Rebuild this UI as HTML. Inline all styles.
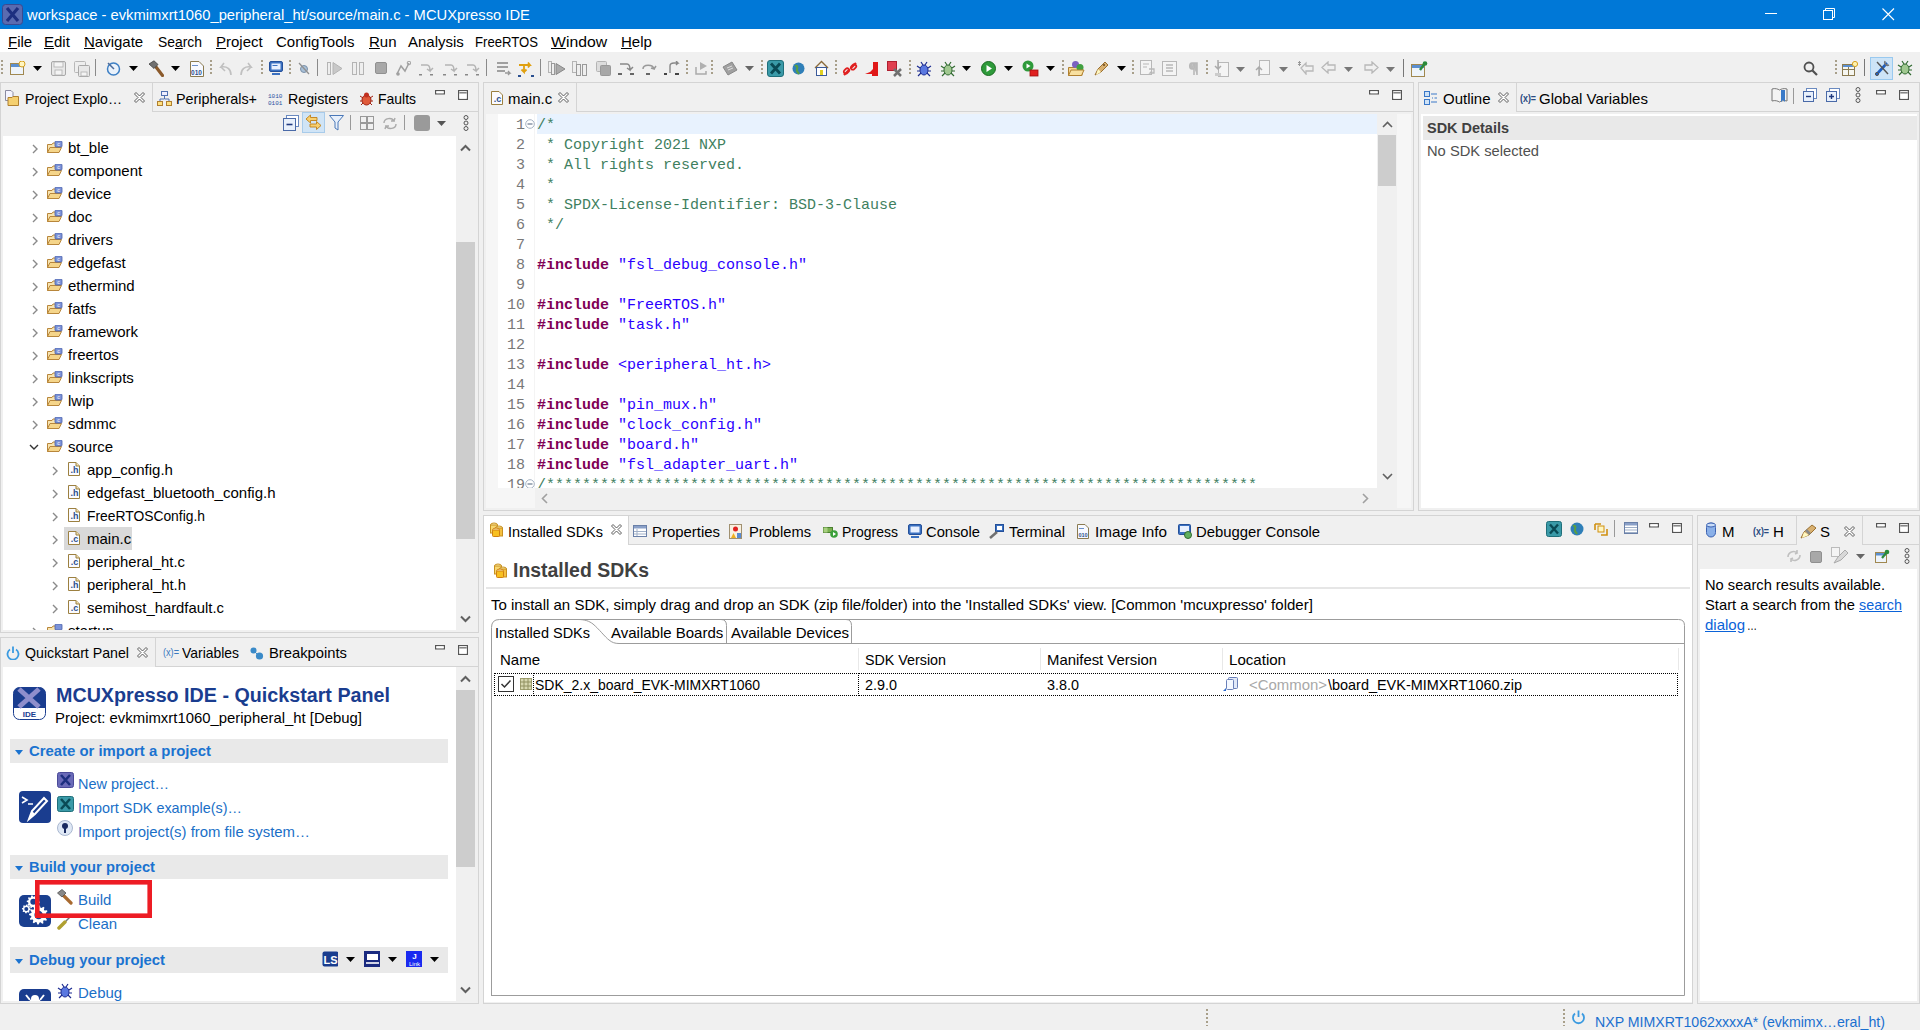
<!DOCTYPE html>
<html><head><meta charset="utf-8"><title>MCUXpresso IDE</title>
<style>
html,body{margin:0;padding:0;width:1920px;height:1030px;overflow:hidden;background:#f0f0f0;}
.a{position:absolute;}
.t{white-space:pre;}
svg{display:block;}
</style></head><body>
<div class="a" style="left:0px;top:0px;width:1920px;height:29px;background:#0078d7;"></div>
<svg class="a" style="left:2px;top:4px;" width="21" height="21" viewBox="0 0 21 21"><rect x="0.5" y="0.5" width="20" height="20" rx="3" fill="#5a6bb0" stroke="#3a4a90"/><path d="M5 4L16 17M16 4L5 17" stroke="#1d2f80" stroke-width="3.2"/></svg>
<div class="a t" style="left:27px;top:7.30px;font-size:15px;line-height:15px;color:#fff;font-weight:normal;font-family:'Liberation Sans', sans-serif;transform:scaleX(0.9825);transform-origin:0 0;">workspace - evkmimxrt1060_peripheral_ht/source/main.c - MCUXpresso IDE</div>
<div class="a" style="left:1765px;top:13px;width:12px;height:1px;background:#fff;"></div>
<svg class="a" style="left:1823px;top:8px;" width="12" height="12" viewBox="0 0 12 12"><rect x="0.5" y="2.5" width="9" height="9" fill="none" stroke="#fff"/><path d="M2.5 2.5V0.5H11.5V9.5H9.5" fill="none" stroke="#fff"/></svg>
<svg class="a" style="left:1882px;top:8px;" width="13" height="13" viewBox="0 0 13 13"><path d="M0.5 0.5L12 12M12 0.5L0.5 12" stroke="#fff" stroke-width="1.1"/></svg>
<div class="a" style="left:0px;top:29px;width:1920px;height:23px;background:#fff;"></div>
<div class="a t" style="left:8px;top:34.30px;font-size:15px;line-height:15px;color:#000;font-weight:normal;font-family:'Liberation Sans', sans-serif;"><u>F</u>ile</div>
<div class="a t" style="left:44px;top:34.30px;font-size:15px;line-height:15px;color:#000;font-weight:normal;font-family:'Liberation Sans', sans-serif;"><u>E</u>dit</div>
<div class="a t" style="left:84px;top:34.30px;font-size:15px;line-height:15px;color:#000;font-weight:normal;font-family:'Liberation Sans', sans-serif;"><u>N</u>avigate</div>
<div class="a t" style="left:158px;top:34.30px;font-size:15px;line-height:15px;color:#000;font-weight:normal;font-family:'Liberation Sans', sans-serif;transform:scaleX(0.9257);transform-origin:0 0;">Se<u>a</u>rch</div>
<div class="a t" style="left:216px;top:34.30px;font-size:15px;line-height:15px;color:#000;font-weight:normal;font-family:'Liberation Sans', sans-serif;"><u>P</u>roject</div>
<div class="a t" style="left:276px;top:34.30px;font-size:15px;line-height:15px;color:#000;font-weight:normal;font-family:'Liberation Sans', sans-serif;">ConfigTools</div>
<div class="a t" style="left:369px;top:34.30px;font-size:15px;line-height:15px;color:#000;font-weight:normal;font-family:'Liberation Sans', sans-serif;"><u>R</u>un</div>
<div class="a t" style="left:408px;top:34.30px;font-size:15px;line-height:15px;color:#000;font-weight:normal;font-family:'Liberation Sans', sans-serif;">Analysis</div>
<div class="a t" style="left:475px;top:34.30px;font-size:15px;line-height:15px;color:#000;font-weight:normal;font-family:'Liberation Sans', sans-serif;transform:scaleX(0.8754);transform-origin:0 0;">FreeRTOS</div>
<div class="a t" style="left:551px;top:34.30px;font-size:15px;line-height:15px;color:#000;font-weight:normal;font-family:'Liberation Sans', sans-serif;transform:scaleX(1.0498);transform-origin:0 0;"><u>W</u>indow</div>
<div class="a t" style="left:621px;top:34.30px;font-size:15px;line-height:15px;color:#000;font-weight:normal;font-family:'Liberation Sans', sans-serif;"><u>H</u>elp</div>
<div class="a" style="left:0px;top:52px;width:1920px;height:30px;background:#f0f0f0;"></div>
<svg class="a" style="left:1px;top:60px;" width="2" height="16" viewBox="0 0 2 16"><rect x="0" y="0" width="2" height="2" fill="#a89f8a"/><rect x="0" y="4" width="2" height="2" fill="#a89f8a"/><rect x="0" y="8" width="2" height="2" fill="#a89f8a"/><rect x="0" y="12" width="2" height="2" fill="#a89f8a"/></svg>
<svg class="a" style="left:10px;top:61px;" width="16" height="15" viewBox="0 0 16 15"><rect x="0.5" y="2.5" width="13" height="11" fill="#eef4fb" stroke="#a08850"/><rect x="1" y="3" width="12" height="3" fill="#5b8fd0"/><circle cx="12" cy="3" r="3" fill="#fff5c0" stroke="#d4a020"/></svg>
<svg class="a" style="left:33px;top:66px;" width="10" height="6" viewBox="0 0 10 6"><path d="M0 0H9L4.5 5Z" fill="#000"/></svg>
<svg class="a" style="left:51px;top:61px;" width="15" height="15" viewBox="0 0 15 15"><rect x="0.5" y="0.5" width="14" height="14" rx="1.5" fill="#e8e8e8" stroke="#a8a8a8"/><rect x="3" y="1" width="9" height="5" fill="#f4f4f4" stroke="#b0b0b0" stroke-width="0.8"/><rect x="4" y="9" width="7" height="5" fill="#f4f4f4" stroke="#b0b0b0" stroke-width="0.8"/></svg>
<svg class="a" style="left:74px;top:61px;" width="16" height="16" viewBox="0 0 16 16"><rect x="0.5" y="0.5" width="11" height="11" rx="1" fill="#eee" stroke="#b8b8b8"/><rect x="4.5" y="4.5" width="11" height="11" rx="1" fill="#e8e8e8" stroke="#a8a8a8"/><rect x="7" y="11" width="6" height="4" fill="#f4f4f4" stroke="#b0b0b0" stroke-width="0.8"/></svg>
<div class="a" style="left:95px;top:59px;width:1px;height:17px;background:#8a8a8a;"></div>
<svg class="a" style="left:106px;top:61px;" width="15" height="15" viewBox="0 0 15 15"><circle cx="7.5" cy="8" r="6" fill="#eaf2fb" stroke="#3d7fc4" stroke-width="1.5"/><path d="M2 2L8 8" stroke="#4a6a9a" stroke-width="1.5"/></svg>
<svg class="a" style="left:129px;top:66px;" width="10" height="6" viewBox="0 0 10 6"><path d="M0 0H9L4.5 5Z" fill="#000"/></svg>
<svg class="a" style="left:147px;top:60px;" width="17" height="17" viewBox="0 0 17 17"><path d="M9 7L15.5 15.5" stroke="#8b5a2b" stroke-width="3.2" stroke-linecap="round"/><path d="M2 4L7 0.8L11 4.5L7 8.5Z" fill="#707070" stroke="#404040" stroke-width="0.8"/></svg>
<svg class="a" style="left:171px;top:66px;" width="10" height="6" viewBox="0 0 10 6"><path d="M0 0H9L4.5 5Z" fill="#000"/></svg>
<svg class="a" style="left:190px;top:61px;" width="14" height="16" viewBox="0 0 14 16"><path d="M0.5 0.5H9L13.5 5V15.5H0.5Z" fill="#f7f9ff" stroke="#8a7a50"/><text x="6.5" y="14" font-size="6.5" font-weight="bold" fill="#2d4f8e" text-anchor="middle" font-family="Liberation Sans">010</text><rect x="2" y="4" width="6" height="1" fill="#6b8fc8"/></svg>
<svg class="a" style="left:210px;top:60px;" width="2" height="16" viewBox="0 0 2 16"><rect x="0" y="0" width="2" height="2" fill="#a89f8a"/><rect x="0" y="4" width="2" height="2" fill="#a89f8a"/><rect x="0" y="8" width="2" height="2" fill="#a89f8a"/><rect x="0" y="12" width="2" height="2" fill="#a89f8a"/></svg>
<svg class="a" style="left:217px;top:61px;" width="16" height="15" viewBox="0 0 16 15"><path d="M14 14C14 8 10 5 4 6L7 2M4 6L8 10" fill="none" stroke="#c0c0c0" stroke-width="1.6"/></svg>
<svg class="a" style="left:239px;top:61px;" width="16" height="15" viewBox="0 0 16 15"><path d="M2 14C2 8 6 5 12 6L9 2M12 6L8 10" fill="none" stroke="#c0c0c0" stroke-width="1.6"/></svg>
<svg class="a" style="left:261px;top:60px;" width="2" height="16" viewBox="0 0 2 16"><rect x="0" y="0" width="2" height="2" fill="#a89f8a"/><rect x="0" y="4" width="2" height="2" fill="#a89f8a"/><rect x="0" y="8" width="2" height="2" fill="#a89f8a"/><rect x="0" y="12" width="2" height="2" fill="#a89f8a"/></svg>
<svg class="a" style="left:269px;top:61px;" width="14" height="15" viewBox="0 0 14 15"><rect x="0.5" y="0.5" width="13" height="10" rx="1.5" fill="#3a70c0" stroke="#24509a"/><rect x="2.5" y="2.5" width="9" height="6" fill="#e8f0ff"/><rect x="3.5" y="4" width="5" height="1" fill="#3a70c0"/><rect x="3" y="12" width="8" height="2" fill="#3a70c0"/></svg>
<svg class="a" style="left:289px;top:60px;" width="2" height="16" viewBox="0 0 2 16"><rect x="0" y="0" width="2" height="2" fill="#a89f8a"/><rect x="0" y="4" width="2" height="2" fill="#a89f8a"/><rect x="0" y="8" width="2" height="2" fill="#a89f8a"/><rect x="0" y="12" width="2" height="2" fill="#a89f8a"/></svg>
<svg class="a" style="left:298px;top:62px;" width="12" height="13" viewBox="0 0 12 13"><circle cx="6" cy="7" r="3.5" fill="#a8c0d8" stroke="#7a90a8"/><path d="M1 1L11 12" stroke="#909090" stroke-width="1.3"/></svg>
<div class="a" style="left:317px;top:59px;width:1px;height:17px;background:#8a8a8a;"></div>
<svg class="a" style="left:327px;top:62px;" width="16" height="13" viewBox="0 0 16 13"><rect x="0.5" y="0.5" width="3" height="12" fill="#eee" stroke="#b4b4b4"/><path d="M6 0.5L15 6.5L6 12.5Z" fill="#c8c8c8" stroke="#b4b4b4"/></svg>
<svg class="a" style="left:352px;top:62px;" width="12" height="13" viewBox="0 0 12 13"><rect x="0.5" y="0.5" width="4" height="12" fill="#eee" stroke="#b4b4b4"/><rect x="7.5" y="0.5" width="4" height="12" fill="#eee" stroke="#b4b4b4"/></svg>
<svg class="a" style="left:375px;top:62px;" width="12" height="12" viewBox="0 0 12 12"><rect x="0.5" y="0.5" width="11" height="11" rx="1.5" fill="#a8a8a8" stroke="#909090"/></svg>
<svg class="a" style="left:396px;top:61px;" width="15" height="15" viewBox="0 0 15 15"><path d="M1 13L5 5L9 10L13 2" fill="none" stroke="#a0a0a0" stroke-width="1.5"/><circle cx="2" cy="13" r="1.8" fill="#a0a0a0"/><circle cx="13" cy="2" r="1.8" fill="none" stroke="#a0a0a0"/></svg>
<svg class="a" style="left:418px;top:62px;" width="17" height="14" viewBox="0 0 17 14"><path d="M3 3H9C12 3 12 7 12 9L9 7M12 9L15 6" fill="none" stroke="#b4b4b4" stroke-width="1.5"/><rect x="1" y="12" width="3" height="1.5" fill="#888"/><rect x="12" y="12" width="3" height="1.5" fill="#888"/></svg>
<svg class="a" style="left:442px;top:62px;" width="17" height="14" viewBox="0 0 17 14"><path d="M3 3H9C12 3 12 7 12 9L9 7M12 9L15 6" fill="none" stroke="#b4b4b4" stroke-width="1.5"/><rect x="1" y="12" width="3" height="1.5" fill="#888"/><rect x="12" y="12" width="3" height="1.5" fill="#888"/></svg>
<svg class="a" style="left:464px;top:62px;" width="17" height="14" viewBox="0 0 17 14"><path d="M3 3H9C12 3 12 7 12 9L9 7M12 9L15 6" fill="none" stroke="#b4b4b4" stroke-width="1.5"/><rect x="1" y="12" width="3" height="1.5" fill="#888"/><rect x="12" y="12" width="3" height="1.5" fill="#888"/></svg>
<div class="a" style="left:486px;top:59px;width:1px;height:17px;background:#8a8a8a;"></div>
<svg class="a" style="left:496px;top:61px;" width="16" height="16" viewBox="0 0 16 16"><rect x="1" y="1" width="11" height="2" fill="#a0a0a0"/><rect x="1" y="5" width="11" height="2" fill="#a0a0a0"/><rect x="1" y="9" width="8" height="2" fill="#a0a0a0"/><path d="M9 12H14L12 10M14 12L12 14" fill="none" stroke="#999" stroke-width="1.3"/></svg>
<svg class="a" style="left:518px;top:61px;" width="17" height="16" viewBox="0 0 17 16"><path d="M1 4H12L10 1.5M12 4L10 6.5" fill="none" stroke="#e0a010" stroke-width="1.8"/><path d="M6 4V11L3.5 8.5M6 11L8.5 8.5" fill="none" stroke="#e0a010" stroke-width="1.8"/><rect x="0" y="14" width="3" height="2" fill="#2a5090"/><rect x="13" y="14" width="3" height="2" fill="#2a5090"/></svg>
<div class="a" style="left:540px;top:59px;width:1px;height:17px;background:#8a8a8a;"></div>
<svg class="a" style="left:548px;top:61px;" width="18" height="15" viewBox="0 0 18 15"><rect x="0.5" y="0.5" width="3" height="11" fill="#eee" stroke="#b4b4b4"/><rect x="3.5" y="2.5" width="3" height="11" fill="#eee" stroke="#999"/><path d="M8 2.5L17 8L8 13.5Z" fill="#aaa" stroke="#888"/></svg>
<svg class="a" style="left:572px;top:61px;" width="16" height="15" viewBox="0 0 16 15"><rect x="0.5" y="0.5" width="4" height="11" fill="#eee" stroke="#b4b4b4"/><rect x="4.5" y="3.5" width="4" height="11" fill="#eee" stroke="#999"/><rect x="10.5" y="3.5" width="4" height="11" fill="#eee" stroke="#999"/></svg>
<svg class="a" style="left:596px;top:61px;" width="15" height="15" viewBox="0 0 15 15"><rect x="0.5" y="0.5" width="10" height="10" rx="1" fill="#ddd" stroke="#b4b4b4"/><rect x="4.5" y="4.5" width="10" height="10" rx="1" fill="#a8a8a8" stroke="#999"/></svg>
<svg class="a" style="left:618px;top:62px;" width="17" height="14" viewBox="0 0 17 14"><path d="M2 2H9C12 2 12 6 12 8L9 6M12 8L15 5" fill="none" stroke="#888" stroke-width="1.5"/><rect x="0" y="11" width="4" height="2" fill="#666"/><rect x="12" y="11" width="4" height="2" fill="#666"/></svg>
<svg class="a" style="left:641px;top:62px;" width="17" height="14" viewBox="0 0 17 14"><path d="M2 7C2 2 12 2 13 7L10 6M13 7L15 4" fill="none" stroke="#999" stroke-width="1.5"/><rect x="5" y="11" width="4" height="2" fill="#666"/></svg>
<svg class="a" style="left:664px;top:61px;" width="16" height="15" viewBox="0 0 16 15"><path d="M6 12V5C6 3 8 2 10 2H14L12 0M14 2L12 4" fill="none" stroke="#888" stroke-width="1.4"/><rect x="0" y="12" width="3" height="2" fill="#444"/><rect x="11" y="12" width="4" height="2" fill="#444"/></svg>
<svg class="a" style="left:686px;top:60px;" width="2" height="16" viewBox="0 0 2 16"><rect x="0" y="0" width="2" height="2" fill="#a89f8a"/><rect x="0" y="4" width="2" height="2" fill="#a89f8a"/><rect x="0" y="8" width="2" height="2" fill="#a89f8a"/><rect x="0" y="12" width="2" height="2" fill="#a89f8a"/></svg>
<svg class="a" style="left:693px;top:61px;" width="16" height="15" viewBox="0 0 16 15"><path d="M3 6V13H13V10" fill="none" stroke="#aaa" stroke-width="1.5"/><path d="M7 1L14 5L7 9Z" fill="#b0b0b0"/></svg>
<svg class="a" style="left:711px;top:60px;" width="2" height="16" viewBox="0 0 2 16"><rect x="0" y="0" width="2" height="2" fill="#a89f8a"/><rect x="0" y="4" width="2" height="2" fill="#a89f8a"/><rect x="0" y="8" width="2" height="2" fill="#a89f8a"/><rect x="0" y="12" width="2" height="2" fill="#a89f8a"/></svg>
<svg class="a" style="left:722px;top:61px;" width="16" height="15" viewBox="0 0 16 15"><path d="M1 6L10 1L15 9L6 14Z" fill="#a0a0a0" stroke="#888"/><path d="M5 7L10 5M6 9L11 7" stroke="#ddd"/></svg>
<svg class="a" style="left:745px;top:66px;" width="10" height="6" viewBox="0 0 10 6"><path d="M0 0H9L4.5 5Z" fill="#666"/></svg>
<svg class="a" style="left:761px;top:60px;" width="2" height="16" viewBox="0 0 2 16"><rect x="0" y="0" width="2" height="2" fill="#a89f8a"/><rect x="0" y="4" width="2" height="2" fill="#a89f8a"/><rect x="0" y="8" width="2" height="2" fill="#a89f8a"/><rect x="0" y="12" width="2" height="2" fill="#a89f8a"/></svg>
<svg class="a" style="left:767px;top:60px;" width="17" height="17" viewBox="0 0 17 17"><rect x="0.5" y="0.5" width="16" height="16" rx="2.5" fill="#3a9aa8" stroke="#1f6f7a"/><path d="M4 3.5L13 13.5M13 3.5L4 13.5" stroke="#0a4a55" stroke-width="2.8"/></svg>
<svg class="a" style="left:792px;top:62px;" width="13" height="13" viewBox="0 0 13 13"><circle cx="6.5" cy="6.5" r="6" fill="#2f7fb8"/><path d="M3 4C5 3 6 5 5 7C4 9 6 10 7 12" fill="none" stroke="#5aa040" stroke-width="2"/></svg>
<svg class="a" style="left:814px;top:60px;" width="15" height="17" viewBox="0 0 15 17"><path d="M1 8L7.5 1.5L14 8" fill="none" stroke="#8a6a3a" stroke-width="1.4"/><rect x="2.5" y="7.5" width="10" height="8" fill="#fff" stroke="#3a5a9a"/><rect x="6" y="10" width="3" height="5" fill="#e0d020"/></svg>
<svg class="a" style="left:835px;top:60px;" width="2" height="16" viewBox="0 0 2 16"><rect x="0" y="0" width="2" height="2" fill="#a89f8a"/><rect x="0" y="4" width="2" height="2" fill="#a89f8a"/><rect x="0" y="8" width="2" height="2" fill="#a89f8a"/><rect x="0" y="12" width="2" height="2" fill="#a89f8a"/></svg>
<svg class="a" style="left:842px;top:61px;" width="16" height="16" viewBox="0 0 16 16"><path d="M2 14L7 9M9 7L14 2" stroke="#e02020" stroke-width="2.2"/><rect x="1.5" y="8" width="6" height="4" rx="2" transform="rotate(-45 4.5 10)" fill="none" stroke="#e02020" stroke-width="1.8"/><rect x="8.5" y="4" width="6" height="4" rx="2" transform="rotate(-45 11.5 6)" fill="none" stroke="#e02020" stroke-width="1.8"/></svg>
<svg class="a" style="left:864px;top:61px;" width="15" height="16" viewBox="0 0 15 16"><path d="M9 1H14V15H8V13H1L6 11L9 8Z" fill="#e01818"/></svg>
<svg class="a" style="left:887px;top:61px;" width="15" height="16" viewBox="0 0 15 16"><rect x="0.5" y="0.5" width="9" height="9" fill="#e04050" stroke="#b02030"/><path d="M7 8L14 15M14 8L7 15" stroke="#707070" stroke-width="2.5"/></svg>
<svg class="a" style="left:909px;top:60px;" width="2" height="16" viewBox="0 0 2 16"><rect x="0" y="0" width="2" height="2" fill="#a89f8a"/><rect x="0" y="4" width="2" height="2" fill="#a89f8a"/><rect x="0" y="8" width="2" height="2" fill="#a89f8a"/><rect x="0" y="12" width="2" height="2" fill="#a89f8a"/></svg>
<svg class="a" style="left:916px;top:61px;" width="16" height="16" viewBox="0 0 16 16"><ellipse cx="8" cy="9" rx="4" ry="5" fill="#5a78e0" stroke="#1a2a90"/><path d="M1 5L4 7M15 5L12 7M1 10H4M15 10H12M2 15L5 12M14 15L11 12M5 1L7 4M11 1L9 4" stroke="#1a2a90" stroke-width="1.2"/></svg>
<svg class="a" style="left:940px;top:61px;" width="16" height="16" viewBox="0 0 16 16"><ellipse cx="8" cy="9" rx="4" ry="5" fill="#a0c890" stroke="#306a30"/><path d="M1 5L4 7M15 5L12 7M1 10H4M15 10H12M2 15L5 12M14 15L11 12M5 1L7 4M11 1L9 4" stroke="#306a30" stroke-width="1.2"/></svg>
<svg class="a" style="left:962px;top:66px;" width="10" height="6" viewBox="0 0 10 6"><path d="M0 0H9L4.5 5Z" fill="#000"/></svg>
<svg class="a" style="left:981px;top:61px;" width="15" height="15" viewBox="0 0 15 15"><circle cx="7.5" cy="7.5" r="7" fill="#2e9a3a" stroke="#1a6a20"/><path d="M5.5 4L11 7.5L5.5 11Z" fill="#fff"/></svg>
<svg class="a" style="left:1004px;top:66px;" width="10" height="6" viewBox="0 0 10 6"><path d="M0 0H9L4.5 5Z" fill="#000"/></svg>
<svg class="a" style="left:1022px;top:60px;" width="17" height="17" viewBox="0 0 17 17"><circle cx="6" cy="6" r="5.5" fill="#2e9a3a"/><path d="M4.5 3.5L8.5 6L4.5 8.5Z" fill="#fff"/><rect x="8" y="10" width="8" height="6" fill="#e02020" stroke="#a01010" stroke-width="0.8"/></svg>
<svg class="a" style="left:1046px;top:66px;" width="10" height="6" viewBox="0 0 10 6"><path d="M0 0H9L4.5 5Z" fill="#000"/></svg>
<svg class="a" style="left:1062px;top:60px;" width="2" height="16" viewBox="0 0 2 16"><rect x="0" y="0" width="2" height="2" fill="#a89f8a"/><rect x="0" y="4" width="2" height="2" fill="#a89f8a"/><rect x="0" y="8" width="2" height="2" fill="#a89f8a"/><rect x="0" y="12" width="2" height="2" fill="#a89f8a"/></svg>
<svg class="a" style="left:1068px;top:60px;" width="17" height="17" viewBox="0 0 17 17"><path d="M0.5 7.5H7L8 6H14V15.5H0.5Z" fill="#f5d590" stroke="#b08030"/><circle cx="7.5" cy="4.5" r="3.5" fill="#7a60c0"/><circle cx="12" cy="7.5" r="3.5" fill="#40a040"/><path d="M0.5 15.5L3 10H16L13.5 15.5Z" fill="#f8e0a0" stroke="#b08030"/></svg>
<svg class="a" style="left:1093px;top:60px;" width="17" height="17" viewBox="0 0 17 17"><path d="M2 15L5 9L12 2L15 5L8 12Z" fill="#d8b070" stroke="#9a7030"/><path d="M5 9L8 12L3 15Z" fill="#fff8c0"/><circle cx="11" cy="5" r="1" fill="#6a4a20"/></svg>
<svg class="a" style="left:1117px;top:66px;" width="10" height="6" viewBox="0 0 10 6"><path d="M0 0H9L4.5 5Z" fill="#000"/></svg>
<svg class="a" style="left:1132px;top:60px;" width="2" height="16" viewBox="0 0 2 16"><rect x="0" y="0" width="2" height="2" fill="#a89f8a"/><rect x="0" y="4" width="2" height="2" fill="#a89f8a"/><rect x="0" y="8" width="2" height="2" fill="#a89f8a"/><rect x="0" y="12" width="2" height="2" fill="#a89f8a"/></svg>
<svg class="a" style="left:1140px;top:60px;" width="16" height="16" viewBox="0 0 16 16"><rect x="0.5" y="0.5" width="11" height="14" fill="#f4f4f4" stroke="#b8b8b8"/><path d="M3 4H9M3 7H7" stroke="#b8b8b8"/><path d="M9 9H14V13H10L12 11" fill="none" stroke="#b8b8b8" stroke-width="1.3"/></svg>
<svg class="a" style="left:1162px;top:61px;" width="15" height="15" viewBox="0 0 15 15"><rect x="0.5" y="0.5" width="14" height="14" fill="#f4f4f4" stroke="#b8b8b8"/><path d="M4 4H11M4 7H11M4 10H11" stroke="#b8b8b8" stroke-width="1.5"/></svg>
<svg class="a" style="left:1188px;top:62px;" width="10" height="13" viewBox="0 0 10 13"><path d="M4 1H9V13M6 1V13M4 1C1 1 1 7 4 7H6" fill="#bbb" stroke="#b8b8b8" stroke-width="1.6"/></svg>
<svg class="a" style="left:1206px;top:60px;" width="2" height="16" viewBox="0 0 2 16"><rect x="0" y="0" width="2" height="2" fill="#a89f8a"/><rect x="0" y="4" width="2" height="2" fill="#a89f8a"/><rect x="0" y="8" width="2" height="2" fill="#a89f8a"/><rect x="0" y="12" width="2" height="2" fill="#a89f8a"/></svg>
<svg class="a" style="left:1214px;top:60px;" width="15" height="17" viewBox="0 0 15 17"><rect x="4.5" y="2.5" width="10" height="14" fill="#f4f4f4" stroke="#b8b8b8"/><path d="M4 0V9L1 6M4 9L7 6" fill="none" stroke="#aaa" stroke-width="1.5"/><rect x="1" y="13" width="6" height="3" fill="#ccc"/></svg>
<svg class="a" style="left:1236px;top:67px;" width="10" height="6" viewBox="0 0 10 6"><path d="M0 0H9L4.5 5Z" fill="#777"/></svg>
<svg class="a" style="left:1255px;top:60px;" width="15" height="17" viewBox="0 0 15 17"><rect x="4.5" y="0.5" width="10" height="14" fill="#f4f4f4" stroke="#b8b8b8"/><path d="M4 16V7L1 10M4 7L7 10" fill="none" stroke="#aaa" stroke-width="1.5"/></svg>
<svg class="a" style="left:1279px;top:67px;" width="10" height="6" viewBox="0 0 10 6"><path d="M0 0H9L4.5 5Z" fill="#777"/></svg>
<svg class="a" style="left:1297px;top:61px;" width="17" height="14" viewBox="0 0 17 14"><path d="M4 7L9 2V5H16V10H9V13Z" fill="none" stroke="#b8b8b8" stroke-width="1.3"/><path d="M1 1L4 4M4 1L1 4M2.5 0V5" stroke="#999"/></svg>
<svg class="a" style="left:1321px;top:61px;" width="15" height="13" viewBox="0 0 15 13"><path d="M1 6.5L7 1V4H14V9H7V12Z" fill="none" stroke="#b8b8b8" stroke-width="1.3"/></svg>
<svg class="a" style="left:1344px;top:67px;" width="10" height="6" viewBox="0 0 10 6"><path d="M0 0H9L4.5 5Z" fill="#777"/></svg>
<svg class="a" style="left:1364px;top:61px;" width="15" height="13" viewBox="0 0 15 13"><path d="M14 6.5L8 1V4H1V9H8V12Z" fill="none" stroke="#b8b8b8" stroke-width="1.3"/></svg>
<svg class="a" style="left:1386px;top:67px;" width="10" height="6" viewBox="0 0 10 6"><path d="M0 0H9L4.5 5Z" fill="#777"/></svg>
<div class="a" style="left:1403px;top:59px;width:1px;height:18px;background:#777;"></div>
<svg class="a" style="left:1411px;top:61px;" width="17" height="16" viewBox="0 0 17 16"><rect x="0.5" y="3.5" width="13" height="12" fill="#eef4fb" stroke="#a08850"/><rect x="1" y="4" width="12" height="3" fill="#5b8fd0"/><path d="M9 9L14 2" stroke="#2a8a3a" stroke-width="2.4"/><circle cx="14" cy="2.5" r="2.3" fill="#2a8a3a"/></svg>
<svg class="a" style="left:1803px;top:61px;" width="15" height="15" viewBox="0 0 15 15"><circle cx="6" cy="6" r="4.5" fill="none" stroke="#505050" stroke-width="1.8"/><path d="M9.5 9.5L14 14" stroke="#505050" stroke-width="2.2"/></svg>
<svg class="a" style="left:1835px;top:60px;" width="2" height="16" viewBox="0 0 2 16"><rect x="0" y="0" width="2" height="2" fill="#a89f8a"/><rect x="0" y="4" width="2" height="2" fill="#a89f8a"/><rect x="0" y="8" width="2" height="2" fill="#a89f8a"/><rect x="0" y="12" width="2" height="2" fill="#a89f8a"/></svg>
<svg class="a" style="left:1842px;top:61px;" width="16" height="15" viewBox="0 0 16 15"><rect x="0.5" y="3.5" width="12" height="11" fill="#f6f6f0" stroke="#8a7a50"/><path d="M0.5 8.5H12.5M6.5 3.5V14.5" stroke="#8a7a50"/><rect x="1" y="4" width="11" height="2" fill="#5b8fd0"/><circle cx="13" cy="3" r="2.6" fill="#fff3b0" stroke="#d4a020"/></svg>
<div class="a" style="left:1864px;top:59px;width:1px;height:17px;background:#777;"></div>
<div class="a" style="left:1870px;top:57px;width:23px;height:23px;background:#cde4f7;box-sizing:border-box;border:1px solid #99c9ef;"></div>
<svg class="a" style="left:1874px;top:60px;" width="16" height="17" viewBox="0 0 16 17"><path d="M2 15L13 3" stroke="#1f5fbf" stroke-width="2.6"/><path d="M3 2L14 14" stroke="#555" stroke-width="1.4"/><circle cx="3" cy="14" r="1.6" fill="none" stroke="#555"/><path d="M11 1A3 3 0 0 0 15 5" fill="none" stroke="#777" stroke-width="1.6"/></svg>
<svg class="a" style="left:1897px;top:60px;" width="16" height="16" viewBox="0 0 16 16"><ellipse cx="8" cy="9" rx="4" ry="5" fill="#a0c890" stroke="#306a30"/><path d="M1 5L4 7M15 5L12 7M1 10H4M15 10H12M2 15L5 12M14 15L11 12M5 1L7 4M11 1L9 4" stroke="#306a30" stroke-width="1.2"/></svg>
<div class="a" style="left:0px;top:82px;width:479px;height:551px;background:#f0f0f0;box-sizing:border-box;border:1px solid #d4d4d4;"></div>
<div class="a" style="left:152px;top:83px;width:1px;height:28px;background:#d4d4d4;"></div>
<div class="a" style="left:152px;top:111px;width:326px;height:1px;background:#d4d4d4;"></div>
<div class="a" style="left:3px;top:136px;width:453px;height:494px;background:#fff;"></div>
<div class="a" style="left:456px;top:136px;width:20px;height:494px;background:#f0f0f0;"></div>
<div class="a" style="left:456px;top:242px;width:19px;height:297px;background:#cdcdcd;"></div>
<svg class="a" style="left:460px;top:144px;" width="11" height="8" viewBox="0 0 11 8"><path d="M1 6.5L5.5 2L10 6.5" stroke="#606060" stroke-width="2" fill="none"/></svg>
<svg class="a" style="left:460px;top:615px;" width="11" height="8" viewBox="0 0 11 8"><path d="M1 1.5L5.5 6L10 1.5" stroke="#606060" stroke-width="2" fill="none"/></svg>
<svg class="a" style="left:5px;top:90px;" width="14" height="16" viewBox="0 0 14 16"><path d="M0.5 0.5H6L8 2.5V10.5H0.5Z" fill="#f4f4ff" stroke="#8a8aa0"/><path d="M3 7.5H7L8 6.5H13.5V15.5H3Z" fill="#f5d070" stroke="#b08030"/></svg>
<div class="a t" style="left:25px;top:91.30px;font-size:15px;line-height:15px;color:#000;font-weight:normal;font-family:'Liberation Sans', sans-serif;transform:scaleX(0.9383);transform-origin:0 0;">Project Explo…</div>
<svg class="a" style="left:134px;top:92px;" width="11" height="11" viewBox="0 0 11 11"><path d="M0.5 2L2 0.5L5.5 4L9 0.5L10.5 2L7 5.5L10.5 9L9 10.5L5.5 7L2 10.5L0.5 9L4 5.5Z" fill="#fff" stroke="#5a5a5a" stroke-width="1" stroke-linejoin="round"/></svg>
<svg class="a" style="left:157px;top:91px;" width="15" height="15" viewBox="0 0 15 15"><rect x="4.5" y="0.5" width="6" height="4" fill="#eef" stroke="#5070b0"/><rect x="0.5" y="10.5" width="5" height="4" fill="#ffe080" stroke="#b08030"/><rect x="9.5" y="10.5" width="5" height="4" fill="#ffe080" stroke="#b08030"/><path d="M7.5 5V8H3V10M8 8H12V10" fill="none" stroke="#5070b0"/></svg>
<div class="a t" style="left:176px;top:91.30px;font-size:15px;line-height:15px;color:#000;font-weight:normal;font-family:'Liberation Sans', sans-serif;transform:scaleX(0.9570);transform-origin:0 0;">Peripherals+</div>
<svg class="a" style="left:268px;top:92px;" width="16" height="13" viewBox="0 0 16 13"><text x="0" y="6" font-size="6" fill="#2a50a0" font-family="Liberation Mono">1010</text><text x="0" y="12.5" font-size="6" fill="#2a50a0" font-family="Liberation Mono">0101</text></svg>
<div class="a t" style="left:288px;top:91.30px;font-size:15px;line-height:15px;color:#000;font-weight:normal;font-family:'Liberation Sans', sans-serif;transform:scaleX(0.9470);transform-origin:0 0;">Registers</div>
<svg class="a" style="left:359px;top:91px;" width="15" height="15" viewBox="0 0 15 15"><ellipse cx="7.5" cy="9" rx="4.5" ry="5" fill="#e05a3a" stroke="#a02010"/><path d="M1 5L4 7M14 5L11 7M1 10H3M14 10H12M2 14L4 12M13 14L11 12" stroke="#a02010"/><circle cx="7.5" cy="4" r="2.5" fill="#c03020"/></svg>
<div class="a t" style="left:378px;top:91.30px;font-size:15px;line-height:15px;color:#000;font-weight:normal;font-family:'Liberation Sans', sans-serif;transform:scaleX(0.9304);transform-origin:0 0;">Faults</div>
<svg class="a" style="left:435px;top:90px;" width="10" height="5" viewBox="0 0 10 5"><path fill-rule="evenodd" d="M0 0H10V4.6H0ZM1.3 1.3V3.3H8.7V1.3Z" fill="#555"/><rect x="1.3" y="1.3" width="7.4" height="2" fill="#fff"/></svg>
<svg class="a" style="left:458px;top:90px;" width="10" height="10" viewBox="0 0 10 10"><path fill-rule="evenodd" d="M0 0H10V10H0ZM1.3 1.3V8.7H8.7V1.3Z" fill="#555"/><rect x="1.3" y="1.3" width="7.4" height="7.4" fill="#fff"/><rect x="1.3" y="2.3" width="7.4" height="1.1" fill="#555"/></svg>
<svg class="a" style="left:283px;top:115px;" width="16" height="16" viewBox="0 0 16 16"><rect x="3.5" y="0.5" width="12" height="11" fill="#fff" stroke="#6a8ac0"/><rect x="0.5" y="3.5" width="12" height="12" fill="#e8f0fb" stroke="#4a6aa8"/><path d="M3.5 9.5H9.5" stroke="#203a80" stroke-width="1.6"/></svg>
<div class="a" style="left:302px;top:112px;width:23px;height:21px;background:#d0e4f6;box-sizing:border-box;border:1px solid #a8cbea;"></div>
<svg class="a" style="left:305px;top:114px;" width="17" height="17" viewBox="0 0 17 17"><path d="M1 5L5.5 1V3.5H12V6.5H5.5V9Z" fill="#f8d070" stroke="#c08018" stroke-width="0.9" stroke-linejoin="round"/><path d="M16 11.5L11.5 7.5V10H5V13H11.5V15.5Z" fill="#f8d070" stroke="#c08018" stroke-width="0.9" stroke-linejoin="round"/></svg>
<svg class="a" style="left:329px;top:115px;" width="15" height="16" viewBox="0 0 15 16"><path d="M0.5 0.5H14.5L9 7V15L6 13V7Z" fill="#e8f0fb" stroke="#4a78b8"/></svg>
<div class="a" style="left:350px;top:115px;width:1px;height:15px;background:#999;"></div>
<svg class="a" style="left:360px;top:116px;" width="15" height="15" viewBox="0 0 15 15"><rect x="0.5" y="0.5" width="6" height="6" fill="none" stroke="#999"/><rect x="7.5" y="0.5" width="6" height="6" fill="none" stroke="#999"/><rect x="0.5" y="7.5" width="6" height="6" fill="none" stroke="#999"/><rect x="7.5" y="7.5" width="6" height="6" fill="none" stroke="#999"/></svg>
<svg class="a" style="left:382px;top:116px;" width="16" height="15" viewBox="0 0 16 15"><path d="M2 7C2 2 10 1 12 5L9 5M12 5L13 2M14 8C14 13 6 14 4 10L7 10M4 10L3 13" fill="none" stroke="#aaa" stroke-width="1.4"/></svg>
<div class="a" style="left:404px;top:115px;width:1px;height:15px;background:#999;"></div>
<div class="a" style="left:414px;top:115px;width:16px;height:16px;background:#9a9a9a;border-radius:3px;"></div>
<svg class="a" style="left:437px;top:121px;" width="10" height="6" viewBox="0 0 10 6"><path d="M0 0H9L4.5 5Z" fill="#555"/></svg>
<svg class="a" style="left:463px;top:115px;" width="6" height="16" viewBox="0 0 6 16"><circle cx="3" cy="2.5" r="2" fill="none" stroke="#555"/><circle cx="3" cy="8" r="2" fill="none" stroke="#555"/><circle cx="3" cy="13.5" r="2" fill="none" stroke="#555"/></svg>
<svg class="a" style="left:32px;top:144px;" width="7" height="10" viewBox="0 0 7 10"><path d="M1 1L5 5L1 9" stroke="#8a8a8a" stroke-width="1.4" fill="none"/></svg>
<svg class="a" style="left:47px;top:141px;" width="16" height="13" viewBox="0 0 16 13"><path d="M0.5 3.5H5L6 2H9V11.5H0.5Z" fill="#f8e4b0" stroke="#b8863b"/><path d="M0.5 11.5L3 6.5H14.5L12 11.5Z" fill="#f5d58a" stroke="#b8863b"/><rect x="8" y="0" width="7" height="6" rx="1" fill="#7c93d8" stroke="#4a5fa8" stroke-width="0.8"/><text x="11.5" y="5" font-size="5" fill="#fff" text-anchor="middle" font-family="Liberation Sans">c</text></svg>
<div class="a t" style="left:68px;top:140.30px;font-size:15px;line-height:15px;color:#000;font-weight:normal;font-family:'Liberation Sans', sans-serif;">bt_ble</div>
<svg class="a" style="left:32px;top:167px;" width="7" height="10" viewBox="0 0 7 10"><path d="M1 1L5 5L1 9" stroke="#8a8a8a" stroke-width="1.4" fill="none"/></svg>
<svg class="a" style="left:47px;top:164px;" width="16" height="13" viewBox="0 0 16 13"><path d="M0.5 3.5H5L6 2H9V11.5H0.5Z" fill="#f8e4b0" stroke="#b8863b"/><path d="M0.5 11.5L3 6.5H14.5L12 11.5Z" fill="#f5d58a" stroke="#b8863b"/><rect x="8" y="0" width="7" height="6" rx="1" fill="#7c93d8" stroke="#4a5fa8" stroke-width="0.8"/><text x="11.5" y="5" font-size="5" fill="#fff" text-anchor="middle" font-family="Liberation Sans">c</text></svg>
<div class="a t" style="left:68px;top:163.30px;font-size:15px;line-height:15px;color:#000;font-weight:normal;font-family:'Liberation Sans', sans-serif;">component</div>
<svg class="a" style="left:32px;top:190px;" width="7" height="10" viewBox="0 0 7 10"><path d="M1 1L5 5L1 9" stroke="#8a8a8a" stroke-width="1.4" fill="none"/></svg>
<svg class="a" style="left:47px;top:187px;" width="16" height="13" viewBox="0 0 16 13"><path d="M0.5 3.5H5L6 2H9V11.5H0.5Z" fill="#f8e4b0" stroke="#b8863b"/><path d="M0.5 11.5L3 6.5H14.5L12 11.5Z" fill="#f5d58a" stroke="#b8863b"/><rect x="8" y="0" width="7" height="6" rx="1" fill="#7c93d8" stroke="#4a5fa8" stroke-width="0.8"/><text x="11.5" y="5" font-size="5" fill="#fff" text-anchor="middle" font-family="Liberation Sans">c</text></svg>
<div class="a t" style="left:68px;top:186.30px;font-size:15px;line-height:15px;color:#000;font-weight:normal;font-family:'Liberation Sans', sans-serif;">device</div>
<svg class="a" style="left:32px;top:213px;" width="7" height="10" viewBox="0 0 7 10"><path d="M1 1L5 5L1 9" stroke="#8a8a8a" stroke-width="1.4" fill="none"/></svg>
<svg class="a" style="left:47px;top:210px;" width="16" height="13" viewBox="0 0 16 13"><path d="M0.5 3.5H5L6 2H9V11.5H0.5Z" fill="#f8e4b0" stroke="#b8863b"/><path d="M0.5 11.5L3 6.5H14.5L12 11.5Z" fill="#f5d58a" stroke="#b8863b"/><rect x="8" y="0" width="7" height="6" rx="1" fill="#7c93d8" stroke="#4a5fa8" stroke-width="0.8"/><text x="11.5" y="5" font-size="5" fill="#fff" text-anchor="middle" font-family="Liberation Sans">c</text></svg>
<div class="a t" style="left:68px;top:209.30px;font-size:15px;line-height:15px;color:#000;font-weight:normal;font-family:'Liberation Sans', sans-serif;">doc</div>
<svg class="a" style="left:32px;top:236px;" width="7" height="10" viewBox="0 0 7 10"><path d="M1 1L5 5L1 9" stroke="#8a8a8a" stroke-width="1.4" fill="none"/></svg>
<svg class="a" style="left:47px;top:233px;" width="16" height="13" viewBox="0 0 16 13"><path d="M0.5 3.5H5L6 2H9V11.5H0.5Z" fill="#f8e4b0" stroke="#b8863b"/><path d="M0.5 11.5L3 6.5H14.5L12 11.5Z" fill="#f5d58a" stroke="#b8863b"/><rect x="8" y="0" width="7" height="6" rx="1" fill="#7c93d8" stroke="#4a5fa8" stroke-width="0.8"/><text x="11.5" y="5" font-size="5" fill="#fff" text-anchor="middle" font-family="Liberation Sans">c</text></svg>
<div class="a t" style="left:68px;top:232.30px;font-size:15px;line-height:15px;color:#000;font-weight:normal;font-family:'Liberation Sans', sans-serif;">drivers</div>
<svg class="a" style="left:32px;top:259px;" width="7" height="10" viewBox="0 0 7 10"><path d="M1 1L5 5L1 9" stroke="#8a8a8a" stroke-width="1.4" fill="none"/></svg>
<svg class="a" style="left:47px;top:256px;" width="16" height="13" viewBox="0 0 16 13"><path d="M0.5 3.5H5L6 2H9V11.5H0.5Z" fill="#f8e4b0" stroke="#b8863b"/><path d="M0.5 11.5L3 6.5H14.5L12 11.5Z" fill="#f5d58a" stroke="#b8863b"/><rect x="8" y="0" width="7" height="6" rx="1" fill="#7c93d8" stroke="#4a5fa8" stroke-width="0.8"/><text x="11.5" y="5" font-size="5" fill="#fff" text-anchor="middle" font-family="Liberation Sans">c</text></svg>
<div class="a t" style="left:68px;top:255.30px;font-size:15px;line-height:15px;color:#000;font-weight:normal;font-family:'Liberation Sans', sans-serif;">edgefast</div>
<svg class="a" style="left:32px;top:282px;" width="7" height="10" viewBox="0 0 7 10"><path d="M1 1L5 5L1 9" stroke="#8a8a8a" stroke-width="1.4" fill="none"/></svg>
<svg class="a" style="left:47px;top:279px;" width="16" height="13" viewBox="0 0 16 13"><path d="M0.5 3.5H5L6 2H9V11.5H0.5Z" fill="#f8e4b0" stroke="#b8863b"/><path d="M0.5 11.5L3 6.5H14.5L12 11.5Z" fill="#f5d58a" stroke="#b8863b"/><rect x="8" y="0" width="7" height="6" rx="1" fill="#7c93d8" stroke="#4a5fa8" stroke-width="0.8"/><text x="11.5" y="5" font-size="5" fill="#fff" text-anchor="middle" font-family="Liberation Sans">c</text></svg>
<div class="a t" style="left:68px;top:278.30px;font-size:15px;line-height:15px;color:#000;font-weight:normal;font-family:'Liberation Sans', sans-serif;">ethermind</div>
<svg class="a" style="left:32px;top:305px;" width="7" height="10" viewBox="0 0 7 10"><path d="M1 1L5 5L1 9" stroke="#8a8a8a" stroke-width="1.4" fill="none"/></svg>
<svg class="a" style="left:47px;top:302px;" width="16" height="13" viewBox="0 0 16 13"><path d="M0.5 3.5H5L6 2H9V11.5H0.5Z" fill="#f8e4b0" stroke="#b8863b"/><path d="M0.5 11.5L3 6.5H14.5L12 11.5Z" fill="#f5d58a" stroke="#b8863b"/><rect x="8" y="0" width="7" height="6" rx="1" fill="#7c93d8" stroke="#4a5fa8" stroke-width="0.8"/><text x="11.5" y="5" font-size="5" fill="#fff" text-anchor="middle" font-family="Liberation Sans">c</text></svg>
<div class="a t" style="left:68px;top:301.30px;font-size:15px;line-height:15px;color:#000;font-weight:normal;font-family:'Liberation Sans', sans-serif;">fatfs</div>
<svg class="a" style="left:32px;top:328px;" width="7" height="10" viewBox="0 0 7 10"><path d="M1 1L5 5L1 9" stroke="#8a8a8a" stroke-width="1.4" fill="none"/></svg>
<svg class="a" style="left:47px;top:325px;" width="16" height="13" viewBox="0 0 16 13"><path d="M0.5 3.5H5L6 2H9V11.5H0.5Z" fill="#f8e4b0" stroke="#b8863b"/><path d="M0.5 11.5L3 6.5H14.5L12 11.5Z" fill="#f5d58a" stroke="#b8863b"/><rect x="8" y="0" width="7" height="6" rx="1" fill="#7c93d8" stroke="#4a5fa8" stroke-width="0.8"/><text x="11.5" y="5" font-size="5" fill="#fff" text-anchor="middle" font-family="Liberation Sans">c</text></svg>
<div class="a t" style="left:68px;top:324.30px;font-size:15px;line-height:15px;color:#000;font-weight:normal;font-family:'Liberation Sans', sans-serif;">framework</div>
<svg class="a" style="left:32px;top:351px;" width="7" height="10" viewBox="0 0 7 10"><path d="M1 1L5 5L1 9" stroke="#8a8a8a" stroke-width="1.4" fill="none"/></svg>
<svg class="a" style="left:47px;top:348px;" width="16" height="13" viewBox="0 0 16 13"><path d="M0.5 3.5H5L6 2H9V11.5H0.5Z" fill="#f8e4b0" stroke="#b8863b"/><path d="M0.5 11.5L3 6.5H14.5L12 11.5Z" fill="#f5d58a" stroke="#b8863b"/><rect x="8" y="0" width="7" height="6" rx="1" fill="#7c93d8" stroke="#4a5fa8" stroke-width="0.8"/><text x="11.5" y="5" font-size="5" fill="#fff" text-anchor="middle" font-family="Liberation Sans">c</text></svg>
<div class="a t" style="left:68px;top:347.30px;font-size:15px;line-height:15px;color:#000;font-weight:normal;font-family:'Liberation Sans', sans-serif;">freertos</div>
<svg class="a" style="left:32px;top:374px;" width="7" height="10" viewBox="0 0 7 10"><path d="M1 1L5 5L1 9" stroke="#8a8a8a" stroke-width="1.4" fill="none"/></svg>
<svg class="a" style="left:47px;top:371px;" width="16" height="13" viewBox="0 0 16 13"><path d="M0.5 3.5H5L6 2H9V11.5H0.5Z" fill="#f8e4b0" stroke="#b8863b"/><path d="M0.5 11.5L3 6.5H14.5L12 11.5Z" fill="#f5d58a" stroke="#b8863b"/><rect x="8" y="0" width="7" height="6" rx="1" fill="#7c93d8" stroke="#4a5fa8" stroke-width="0.8"/><text x="11.5" y="5" font-size="5" fill="#fff" text-anchor="middle" font-family="Liberation Sans">c</text></svg>
<div class="a t" style="left:68px;top:370.30px;font-size:15px;line-height:15px;color:#000;font-weight:normal;font-family:'Liberation Sans', sans-serif;">linkscripts</div>
<svg class="a" style="left:32px;top:397px;" width="7" height="10" viewBox="0 0 7 10"><path d="M1 1L5 5L1 9" stroke="#8a8a8a" stroke-width="1.4" fill="none"/></svg>
<svg class="a" style="left:47px;top:394px;" width="16" height="13" viewBox="0 0 16 13"><path d="M0.5 3.5H5L6 2H9V11.5H0.5Z" fill="#f8e4b0" stroke="#b8863b"/><path d="M0.5 11.5L3 6.5H14.5L12 11.5Z" fill="#f5d58a" stroke="#b8863b"/><rect x="8" y="0" width="7" height="6" rx="1" fill="#7c93d8" stroke="#4a5fa8" stroke-width="0.8"/><text x="11.5" y="5" font-size="5" fill="#fff" text-anchor="middle" font-family="Liberation Sans">c</text></svg>
<div class="a t" style="left:68px;top:393.30px;font-size:15px;line-height:15px;color:#000;font-weight:normal;font-family:'Liberation Sans', sans-serif;">lwip</div>
<svg class="a" style="left:32px;top:420px;" width="7" height="10" viewBox="0 0 7 10"><path d="M1 1L5 5L1 9" stroke="#8a8a8a" stroke-width="1.4" fill="none"/></svg>
<svg class="a" style="left:47px;top:417px;" width="16" height="13" viewBox="0 0 16 13"><path d="M0.5 3.5H5L6 2H9V11.5H0.5Z" fill="#f8e4b0" stroke="#b8863b"/><path d="M0.5 11.5L3 6.5H14.5L12 11.5Z" fill="#f5d58a" stroke="#b8863b"/><rect x="8" y="0" width="7" height="6" rx="1" fill="#7c93d8" stroke="#4a5fa8" stroke-width="0.8"/><text x="11.5" y="5" font-size="5" fill="#fff" text-anchor="middle" font-family="Liberation Sans">c</text></svg>
<div class="a t" style="left:68px;top:416.30px;font-size:15px;line-height:15px;color:#000;font-weight:normal;font-family:'Liberation Sans', sans-serif;">sdmmc</div>
<svg class="a" style="left:29px;top:444px;" width="10" height="7" viewBox="0 0 10 7"><path d="M1 1L5 5L9 1" stroke="#333" stroke-width="1.4" fill="none"/></svg>
<svg class="a" style="left:47px;top:440px;" width="16" height="13" viewBox="0 0 16 13"><path d="M0.5 3.5H5L6 2H9V11.5H0.5Z" fill="#f8e4b0" stroke="#b8863b"/><path d="M0.5 11.5L3 6.5H14.5L12 11.5Z" fill="#f5d58a" stroke="#b8863b"/><rect x="8" y="0" width="7" height="6" rx="1" fill="#7c93d8" stroke="#4a5fa8" stroke-width="0.8"/><text x="11.5" y="5" font-size="5" fill="#fff" text-anchor="middle" font-family="Liberation Sans">c</text></svg>
<div class="a t" style="left:68px;top:439.30px;font-size:15px;line-height:15px;color:#000;font-weight:normal;font-family:'Liberation Sans', sans-serif;">source</div>
<svg class="a" style="left:52px;top:466px;" width="7" height="10" viewBox="0 0 7 10"><path d="M1 1L5 5L1 9" stroke="#8a8a8a" stroke-width="1.4" fill="none"/></svg>
<svg class="a" style="left:68px;top:462px;" width="12" height="14" viewBox="0 0 12 14"><path d="M0.5 0.5H8L11.5 4V13.5H0.5Z" fill="#fbfbff" stroke="#9c8040"/><path d="M8 0.5V4H11.5" fill="#f0e0b0" stroke="#9c8040"/><text x="6.5" y="11" font-size="9" font-weight="bold" fill="#2d4f8e" text-anchor="middle" font-family="Liberation Sans">.h</text></svg>
<div class="a t" style="left:87px;top:462.30px;font-size:15px;line-height:15px;color:#000;font-weight:normal;font-family:'Liberation Sans', sans-serif;">app_config.h</div>
<svg class="a" style="left:52px;top:489px;" width="7" height="10" viewBox="0 0 7 10"><path d="M1 1L5 5L1 9" stroke="#8a8a8a" stroke-width="1.4" fill="none"/></svg>
<svg class="a" style="left:68px;top:485px;" width="12" height="14" viewBox="0 0 12 14"><path d="M0.5 0.5H8L11.5 4V13.5H0.5Z" fill="#fbfbff" stroke="#9c8040"/><path d="M8 0.5V4H11.5" fill="#f0e0b0" stroke="#9c8040"/><text x="6.5" y="11" font-size="9" font-weight="bold" fill="#2d4f8e" text-anchor="middle" font-family="Liberation Sans">.h</text></svg>
<div class="a t" style="left:87px;top:485.30px;font-size:15px;line-height:15px;color:#000;font-weight:normal;font-family:'Liberation Sans', sans-serif;">edgefast_bluetooth_config.h</div>
<svg class="a" style="left:52px;top:512px;" width="7" height="10" viewBox="0 0 7 10"><path d="M1 1L5 5L1 9" stroke="#8a8a8a" stroke-width="1.4" fill="none"/></svg>
<svg class="a" style="left:68px;top:508px;" width="12" height="14" viewBox="0 0 12 14"><path d="M0.5 0.5H8L11.5 4V13.5H0.5Z" fill="#fbfbff" stroke="#9c8040"/><path d="M8 0.5V4H11.5" fill="#f0e0b0" stroke="#9c8040"/><text x="6.5" y="11" font-size="9" font-weight="bold" fill="#2d4f8e" text-anchor="middle" font-family="Liberation Sans">.h</text></svg>
<div class="a t" style="left:87px;top:508.30px;font-size:15px;line-height:15px;color:#000;font-weight:normal;font-family:'Liberation Sans', sans-serif;transform:scaleX(0.9230);transform-origin:0 0;">FreeRTOSConfig.h</div>
<div class="a" style="left:64px;top:527px;width:68px;height:23px;background:#d9d9d9;"></div>
<svg class="a" style="left:52px;top:535px;" width="7" height="10" viewBox="0 0 7 10"><path d="M1 1L5 5L1 9" stroke="#8a8a8a" stroke-width="1.4" fill="none"/></svg>
<svg class="a" style="left:68px;top:531px;" width="12" height="14" viewBox="0 0 12 14"><path d="M0.5 0.5H8L11.5 4V13.5H0.5Z" fill="#fbfbff" stroke="#9c8040"/><path d="M8 0.5V4H11.5" fill="#f0e0b0" stroke="#9c8040"/><text x="6.5" y="11" font-size="9" font-weight="bold" fill="#2d4f8e" text-anchor="middle" font-family="Liberation Sans">.c</text></svg>
<div class="a t" style="left:87px;top:531.30px;font-size:15px;line-height:15px;color:#000;font-weight:normal;font-family:'Liberation Sans', sans-serif;">main.c</div>
<svg class="a" style="left:52px;top:558px;" width="7" height="10" viewBox="0 0 7 10"><path d="M1 1L5 5L1 9" stroke="#8a8a8a" stroke-width="1.4" fill="none"/></svg>
<svg class="a" style="left:68px;top:554px;" width="12" height="14" viewBox="0 0 12 14"><path d="M0.5 0.5H8L11.5 4V13.5H0.5Z" fill="#fbfbff" stroke="#9c8040"/><path d="M8 0.5V4H11.5" fill="#f0e0b0" stroke="#9c8040"/><text x="6.5" y="11" font-size="9" font-weight="bold" fill="#2d4f8e" text-anchor="middle" font-family="Liberation Sans">.c</text></svg>
<div class="a t" style="left:87px;top:554.30px;font-size:15px;line-height:15px;color:#000;font-weight:normal;font-family:'Liberation Sans', sans-serif;transform:scaleX(0.9874);transform-origin:0 0;">peripheral_ht.c</div>
<svg class="a" style="left:52px;top:581px;" width="7" height="10" viewBox="0 0 7 10"><path d="M1 1L5 5L1 9" stroke="#8a8a8a" stroke-width="1.4" fill="none"/></svg>
<svg class="a" style="left:68px;top:577px;" width="12" height="14" viewBox="0 0 12 14"><path d="M0.5 0.5H8L11.5 4V13.5H0.5Z" fill="#fbfbff" stroke="#9c8040"/><path d="M8 0.5V4H11.5" fill="#f0e0b0" stroke="#9c8040"/><text x="6.5" y="11" font-size="9" font-weight="bold" fill="#2d4f8e" text-anchor="middle" font-family="Liberation Sans">.h</text></svg>
<div class="a t" style="left:87px;top:577.30px;font-size:15px;line-height:15px;color:#000;font-weight:normal;font-family:'Liberation Sans', sans-serif;transform:scaleX(0.9891);transform-origin:0 0;">peripheral_ht.h</div>
<svg class="a" style="left:52px;top:604px;" width="7" height="10" viewBox="0 0 7 10"><path d="M1 1L5 5L1 9" stroke="#8a8a8a" stroke-width="1.4" fill="none"/></svg>
<svg class="a" style="left:68px;top:600px;" width="12" height="14" viewBox="0 0 12 14"><path d="M0.5 0.5H8L11.5 4V13.5H0.5Z" fill="#fbfbff" stroke="#9c8040"/><path d="M8 0.5V4H11.5" fill="#f0e0b0" stroke="#9c8040"/><text x="6.5" y="11" font-size="9" font-weight="bold" fill="#2d4f8e" text-anchor="middle" font-family="Liberation Sans">.c</text></svg>
<div class="a t" style="left:87px;top:600.30px;font-size:15px;line-height:15px;color:#000;font-weight:normal;font-family:'Liberation Sans', sans-serif;transform:scaleX(0.9896);transform-origin:0 0;">semihost_hardfault.c</div>
<div class="a" style="left:3px;top:620px;width:453px;height:10px;overflow:hidden;">
<svg class="a" style="left:29px;top:7px;" width="7" height="10"><path d="M1 1L5 5L1 9" stroke="#8a8a8a" stroke-width="1.4" fill="none"/></svg>
<svg class="a" style="left:44px;top:4px;" width="16" height="13"><path d="M0.5 3.5H5L6 2H9V11.5H0.5Z" fill="#f8e4b0" stroke="#b8863b"/><path d="M0.5 11.5L3 6.5H14.5L12 11.5Z" fill="#f5d58a" stroke="#b8863b"/><rect x="8" y="0" width="7" height="6" rx="1" fill="#7c93d8" stroke="#4a5fa8" stroke-width="0.8"/></svg>
<div class="a t" style="left:65px;top:3.3px;font-size:15px;line-height:15px;font-family:'Liberation Sans',sans-serif;">startup</div>
</div>
<div class="a" style="left:0px;top:637px;width:479px;height:367px;background:#f0f0f0;box-sizing:border-box;border:1px solid #d4d4d4;"></div>
<div class="a" style="left:155px;top:638px;width:1px;height:28px;background:#d4d4d4;"></div>
<div class="a" style="left:155px;top:666px;width:323px;height:1px;background:#d4d4d4;"></div>
<div class="a" style="left:3px;top:667px;width:453px;height:334px;background:#fff;"></div>
<div class="a" style="left:456px;top:667px;width:20px;height:334px;background:#f0f0f0;"></div>
<div class="a" style="left:456px;top:690px;width:19px;height:177px;background:#cdcdcd;"></div>
<svg class="a" style="left:460px;top:675px;" width="11" height="8" viewBox="0 0 11 8"><path d="M1 6.5L5.5 2L10 6.5" stroke="#606060" stroke-width="2" fill="none"/></svg>
<svg class="a" style="left:460px;top:986px;" width="11" height="8" viewBox="0 0 11 8"><path d="M1 1.5L5.5 6L10 1.5" stroke="#606060" stroke-width="2" fill="none"/></svg>
<svg class="a" style="left:6px;top:646px;" width="14" height="14" viewBox="0 0 14 14"><path d="M4 3.5A5.5 5.5 0 1 0 10 3.5" fill="none" stroke="#3a9ae0" stroke-width="1.8"/><path d="M7 0.5V7" stroke="#3a9ae0" stroke-width="1.8"/></svg>
<div class="a t" style="left:25px;top:645.30px;font-size:15px;line-height:15px;color:#000;font-weight:normal;font-family:'Liberation Sans', sans-serif;transform:scaleX(0.9449);transform-origin:0 0;">Quickstart Panel</div>
<svg class="a" style="left:137px;top:647px;" width="11" height="11" viewBox="0 0 11 11"><path d="M0.5 2L2 0.5L5.5 4L9 0.5L10.5 2L7 5.5L10.5 9L9 10.5L5.5 7L2 10.5L0.5 9L4 5.5Z" fill="#fff" stroke="#5a5a5a" stroke-width="1" stroke-linejoin="round"/></svg>
<div class="a t" style="left:163px;top:647.53px;font-size:10px;line-height:10px;color:#3a7ac0;font-weight:normal;font-family:'Liberation Sans', sans-serif;transform:scaleX(0.9143);transform-origin:0 0;">(x)=</div>
<div class="a t" style="left:182px;top:645.30px;font-size:15px;line-height:15px;color:#000;font-weight:normal;font-family:'Liberation Sans', sans-serif;transform:scaleX(0.9280);transform-origin:0 0;">Variables</div>
<svg class="a" style="left:250px;top:647px;" width="14" height="13" viewBox="0 0 14 13"><circle cx="3.5" cy="3.5" r="3" fill="#3a8ac8"/><circle cx="9.5" cy="9" r="3.6" fill="#3a8ac8"/><path d="M4 4L9 9" stroke="#3a8ac8"/></svg>
<div class="a t" style="left:269px;top:645.30px;font-size:15px;line-height:15px;color:#000;font-weight:normal;font-family:'Liberation Sans', sans-serif;transform:scaleX(0.9846);transform-origin:0 0;">Breakpoints</div>
<svg class="a" style="left:435px;top:645px;" width="10" height="5" viewBox="0 0 10 5"><path fill-rule="evenodd" d="M0 0H10V4.6H0ZM1.3 1.3V3.3H8.7V1.3Z" fill="#555"/><rect x="1.3" y="1.3" width="7.4" height="2" fill="#fff"/></svg>
<svg class="a" style="left:458px;top:645px;" width="10" height="10" viewBox="0 0 10 10"><path fill-rule="evenodd" d="M0 0H10V10H0ZM1.3 1.3V8.7H8.7V1.3Z" fill="#555"/><rect x="1.3" y="1.3" width="7.4" height="7.4" fill="#fff"/><rect x="1.3" y="2.3" width="7.4" height="1.1" fill="#555"/></svg>
<svg class="a" style="left:13px;top:687px;" width="33" height="33" viewBox="0 0 33 33"><rect x="0.5" y="0.5" width="32" height="32" rx="6" fill="#fff" stroke="#1a3d8f"/><path d="M0.5 21V6.5A6 6 0 0 1 6.5 0.5H26.5A6 6 0 0 1 32.5 6.5V21Z" fill="#1a3d8f"/><path d="M6 2L26 20M26 2L6 20" stroke="#8e8ecc" stroke-width="5"/><text x="16.5" y="30" font-size="8" font-weight="bold" fill="#1a3d8f" text-anchor="middle" font-family="Liberation Sans">IDE</text></svg>
<div class="a t" style="left:56px;top:685.07px;font-size:20px;line-height:20px;color:#1a3d8f;font-weight:bold;font-family:'Liberation Sans', sans-serif;transform:scaleX(0.9852);transform-origin:0 0;">MCUXpresso IDE - Quickstart Panel</div>
<div class="a t" style="left:55px;top:710.30px;font-size:15px;line-height:15px;color:#000;font-weight:normal;font-family:'Liberation Sans', sans-serif;transform:scaleX(0.9923);transform-origin:0 0;">Project: evkmimxrt1060_peripheral_ht [Debug]</div>
<div class="a" style="left:10px;top:739px;width:438px;height:24px;background:#e9e9e9;"></div>
<svg class="a" style="left:15px;top:750px;" width="9" height="6" viewBox="0 0 9 6"><path d="M0 0H8L4 5Z" fill="#1b73d0"/></svg>
<div class="a t" style="left:29px;top:743.30px;font-size:15px;line-height:15px;color:#1b73d0;font-weight:bold;font-family:'Liberation Sans', sans-serif;transform:scaleX(0.9922);transform-origin:0 0;">Create or import a project</div>
<svg class="a" style="left:19px;top:791px;" width="33" height="33" viewBox="0 0 33 33"><rect x="0" y="0" width="32" height="32" rx="4" fill="#1a3d8f"/><path d="M3 6L8 9L3 12M9 13H14" stroke="#fff" stroke-width="1.6" fill="none"/><path d="M10 28L13 20L25 7L28 10L16 23Z" fill="none" stroke="#fff" stroke-width="2"/><path d="M10 28L13 20L16 23Z" fill="#fff"/></svg>
<svg class="a" style="left:57px;top:772px;" width="17" height="16" viewBox="0 0 17 16"><rect x="0.5" y="0.5" width="16" height="15" rx="2" fill="#6a6ab8" stroke="#4a4a98"/><path d="M4 3L13 13M13 3L4 13" stroke="#1d2f80" stroke-width="2.6"/></svg>
<div class="a t" style="left:78px;top:776.30px;font-size:15px;line-height:15px;color:#1a6fc7;font-weight:normal;font-family:'Liberation Sans', sans-serif;transform:scaleX(0.9660);transform-origin:0 0;">New project…</div>
<svg class="a" style="left:57px;top:796px;" width="17" height="16" viewBox="0 0 17 16"><rect x="0.5" y="0.5" width="16" height="15" rx="2" fill="#3a9aa8" stroke="#1f6f7a"/><path d="M4 3L13 13M13 3L4 13" stroke="#0a4a55" stroke-width="2.6"/></svg>
<div class="a t" style="left:78px;top:800.30px;font-size:15px;line-height:15px;color:#1a6fc7;font-weight:normal;font-family:'Liberation Sans', sans-serif;transform:scaleX(0.9596);transform-origin:0 0;">Import SDK example(s)…</div>
<svg class="a" style="left:57px;top:820px;" width="16" height="16" viewBox="0 0 16 16"><circle cx="8" cy="8" r="7.5" fill="#dfe8f5" stroke="#aab8d0"/><circle cx="8" cy="6" r="3" fill="#1a2a60"/><path d="M8 8V13" stroke="#1a2a60" stroke-width="2"/></svg>
<div class="a t" style="left:78px;top:824.30px;font-size:15px;line-height:15px;color:#1a6fc7;font-weight:normal;font-family:'Liberation Sans', sans-serif;transform:scaleX(0.9938);transform-origin:0 0;">Import project(s) from file system…</div>
<div class="a" style="left:10px;top:855px;width:438px;height:24px;background:#e9e9e9;"></div>
<svg class="a" style="left:15px;top:866px;" width="9" height="6" viewBox="0 0 9 6"><path d="M0 0H8L4 5Z" fill="#1b73d0"/></svg>
<div class="a t" style="left:29px;top:859.30px;font-size:15px;line-height:15px;color:#1b73d0;font-weight:bold;font-family:'Liberation Sans', sans-serif;transform:scaleX(0.9817);transform-origin:0 0;">Build your project</div>
<svg class="a" style="left:19px;top:895px;" width="32" height="32" viewBox="0 0 32 32"><rect x="0" y="0" width="32" height="32" rx="5" fill="#1a3f8f"/><polygon points="29.20,20.00 29.12,21.25 26.83,21.94 26.52,22.87 27.91,24.80 27.22,25.84 24.89,25.29 24.16,25.94 24.40,28.31 23.27,28.87 21.54,27.23 20.58,27.42 19.60,29.60 18.35,29.52 17.66,27.23 16.73,26.92 14.80,28.31 13.76,27.62 14.31,25.29 13.66,24.56 11.29,24.80 10.73,23.67 12.37,21.94 12.18,20.98 10.00,20.00 10.08,18.75 12.37,18.06 12.68,17.13 11.29,15.20 11.98,14.16 14.31,14.71 15.04,14.06 14.80,11.69 15.93,11.13 17.66,12.77 18.62,12.58 19.60,10.40 20.85,10.48 21.54,12.77 22.47,13.08 24.40,11.69 25.44,12.38 24.89,14.71 25.54,15.44 27.91,15.20 28.47,16.33 26.83,18.06 27.02,19.02" fill="#fff"/><circle cx="19.6" cy="20" r="4.2" fill="#1a3f8f"/><polygon points="20.90,6.80 20.82,7.83 19.20,8.39 18.89,9.14 19.64,10.68 18.97,11.47 17.33,10.96 16.64,11.39 16.34,13.08 15.33,13.32 14.30,11.95 13.49,11.88 12.26,13.08 11.30,12.68 11.27,10.96 10.66,10.44 8.96,10.68 8.42,9.80 9.40,8.39 9.22,7.61 7.70,6.80 7.78,5.77 9.40,5.21 9.71,4.46 8.96,2.92 9.63,2.13 11.27,2.64 11.96,2.21 12.26,0.52 13.27,0.28 14.30,1.65 15.11,1.72 16.34,0.52 17.30,0.92 17.33,2.64 17.94,3.16 19.64,2.92 20.18,3.80 19.20,5.21 19.38,5.99" fill="#fff"/><circle cx="14.3" cy="6.8" r="3" fill="#1a3f8f"/><polygon points="11.70,14.00 11.62,14.86 10.47,15.31 10.15,15.91 10.41,17.11 9.74,17.66 8.61,17.17 7.97,17.37 7.30,18.40 6.44,18.32 5.99,17.17 5.39,16.85 4.19,17.11 3.64,16.44 4.13,15.31 3.93,14.67 2.90,14.00 2.98,13.14 4.13,12.69 4.45,12.09 4.19,10.89 4.86,10.34 5.99,10.83 6.63,10.63 7.30,9.60 8.16,9.68 8.61,10.83 9.21,11.15 10.41,10.89 10.96,11.56 10.47,12.69 10.67,13.33" fill="#fff"/><circle cx="7.3" cy="14" r="2" fill="#1a3f8f"/></svg>
<svg class="a" style="left:57px;top:889px;" width="16" height="16" viewBox="0 0 16 16"><path d="M6 6L14 14" stroke="#a86a30" stroke-width="3.2" stroke-linecap="round"/><path d="M0.5 4L5 0.5L9 4L5 8Z" fill="#888" stroke="#505050" stroke-width="0.8"/></svg>
<div class="a t" style="left:78px;top:892.30px;font-size:15px;line-height:15px;color:#1a6fc7;font-weight:normal;font-family:'Liberation Sans', sans-serif;">Build</div>
<svg class="a" style="left:57px;top:915px;" width="15" height="15" viewBox="0 0 15 15"><path d="M2 13L8 7" stroke="#b0a030" stroke-width="3.5" stroke-linecap="round"/><path d="M9 6L13 2" stroke="#777" stroke-width="1.5"/></svg>
<div class="a t" style="left:78px;top:916.30px;font-size:15px;line-height:15px;color:#1a6fc7;font-weight:normal;font-family:'Liberation Sans', sans-serif;">Clean</div>
<div class="a" style="left:10px;top:947px;width:438px;height:26px;background:#e9e9e9;"></div>
<svg class="a" style="left:15px;top:959px;" width="9" height="6" viewBox="0 0 9 6"><path d="M0 0H8L4 5Z" fill="#1b73d0"/></svg>
<div class="a t" style="left:29px;top:952.30px;font-size:15px;line-height:15px;color:#1b73d0;font-weight:bold;font-family:'Liberation Sans', sans-serif;transform:scaleX(0.9891);transform-origin:0 0;">Debug your project</div>
<svg class="a" style="left:322px;top:951px;" width="16" height="16" viewBox="0 0 16 16"><rect x="0.5" y="0.5" width="16" height="15" rx="2" fill="#1a3d8f"/><text x="8.5" y="12.5" font-size="11" font-weight="bold" fill="#fff" text-anchor="middle" font-family="Liberation Sans">LS</text></svg>
<svg class="a" style="left:346px;top:957px;" width="10" height="6" viewBox="0 0 10 6"><path d="M0 0H9L4.5 5Z" fill="#000"/></svg>
<svg class="a" style="left:364px;top:951px;" width="16" height="16" viewBox="0 0 16 16"><rect x="0" y="0" width="17" height="16" fill="#1a2a80"/><rect x="3" y="3" width="11" height="6" fill="#fff"/><rect x="2" y="11" width="13" height="2" fill="#fff" opacity="0.8"/></svg>
<svg class="a" style="left:388px;top:957px;" width="10" height="6" viewBox="0 0 10 6"><path d="M0 0H9L4.5 5Z" fill="#000"/></svg>
<svg class="a" style="left:406px;top:951px;" width="16" height="16" viewBox="0 0 16 16"><rect x="0" y="0" width="17" height="16" fill="#1a2af0"/><text x="8.5" y="8" font-size="8" font-weight="bold" fill="#fff" text-anchor="middle" font-family="Liberation Sans">J</text><text x="8.5" y="15" font-size="6" fill="#fff" text-anchor="middle" font-family="Liberation Sans">Link</text></svg>
<svg class="a" style="left:430px;top:957px;" width="10" height="6" viewBox="0 0 10 6"><path d="M0 0H9L4.5 5Z" fill="#000"/></svg>
<div class="a" style="left:3px;top:975px;width:453px;height:26px;overflow:hidden;">
<svg class="a" style="left:16px;top:14px" width="33" height="33"><rect x="0" y="0" width="32" height="32" rx="5" fill="#1a3d8f"/><path d="M7 6L11 11M25 6L21 11" stroke="#fff" stroke-width="2" fill="none"/><circle cx="16" cy="10" r="4" fill="#fff"/><path d="M11 11H21V18H11Z" fill="#fff"/></svg>
<svg class="a" style="left:54px;top:8px" width="16" height="16"><ellipse cx="8" cy="9" rx="4" ry="5" fill="#5a78e0" stroke="#1a2a90"/><path d="M1 5L4 7M15 5L12 7M1 10H4M15 10H12M2 15L5 12M14 15L11 12M5 1L7 4M11 1L9 4" stroke="#1a2a90" stroke-width="1.2"/></svg>
<div class="a t" style="left:75px;top:10.3px;font-size:15px;line-height:15px;color:#1a6fc7;font-family:'Liberation Sans',sans-serif;">Debug</div>
</div>
<svg class="a" style="left:35px;top:880px;" width="117" height="38" viewBox="0 0 117 38"><rect x="2.3" y="2.3" width="112.4" height="33.4" fill="none" stroke="#ed1c24" stroke-width="4.6"/></svg>
<div class="a" style="left:483px;top:82px;width:931px;height:429px;background:#f0f0f0;box-sizing:border-box;border:1px solid #d4d4d4;"></div>
<div class="a" style="left:576px;top:83px;width:1px;height:28px;background:#d4d4d4;"></div>
<div class="a" style="left:576px;top:111px;width:837px;height:1px;background:#d4d4d4;"></div>
<svg class="a" style="left:491px;top:91px;" width="12" height="14" viewBox="0 0 12 14"><path d="M0.5 0.5H8L11.5 4V13.5H0.5Z" fill="#fbfbff" stroke="#9c8040"/><text x="6.5" y="11" font-size="9" font-weight="bold" fill="#2d4f8e" text-anchor="middle" font-family="Liberation Sans">.c</text></svg>
<div class="a t" style="left:508px;top:91.30px;font-size:15px;line-height:15px;color:#000;font-weight:normal;font-family:'Liberation Sans', sans-serif;">main.c</div>
<svg class="a" style="left:558px;top:92px;" width="11" height="11" viewBox="0 0 11 11"><path d="M0.5 2L2 0.5L5.5 4L9 0.5L10.5 2L7 5.5L10.5 9L9 10.5L5.5 7L2 10.5L0.5 9L4 5.5Z" fill="#fff" stroke="#5a5a5a" stroke-width="1" stroke-linejoin="round"/></svg>
<svg class="a" style="left:1369px;top:90px;" width="10" height="5" viewBox="0 0 10 5"><path fill-rule="evenodd" d="M0 0H10V4.6H0ZM1.3 1.3V3.3H8.7V1.3Z" fill="#555"/><rect x="1.3" y="1.3" width="7.4" height="2" fill="#fff"/></svg>
<svg class="a" style="left:1392px;top:90px;" width="10" height="10" viewBox="0 0 10 10"><path fill-rule="evenodd" d="M0 0H10V10H0ZM1.3 1.3V8.7H8.7V1.3Z" fill="#555"/><rect x="1.3" y="1.3" width="7.4" height="7.4" fill="#fff"/><rect x="1.3" y="2.3" width="7.4" height="1.1" fill="#555"/></svg>
<div class="a" style="left:484px;top:112px;width:929px;height:398px;background:#f0f0f0;"></div>
<div class="a" style="left:486px;top:114px;width:12px;height:374px;background:#f6f6f6;"></div>
<div class="a" style="left:498px;top:114px;width:36px;height:374px;background:#fff;"></div>
<div class="a" style="left:534px;top:114px;width:843px;height:374px;background:#fff;"></div>
<div class="a" style="left:534px;top:114px;width:1px;height:374px;background:#f4f4f4;"></div>
<div class="a" style="left:537px;top:114px;width:840px;height:20px;background:#e8f2fe;"></div>
<div class="a" style="left:1377px;top:114px;width:20px;height:374px;background:#f0f0f0;"></div>
<div class="a" style="left:1378px;top:135px;width:18px;height:51px;background:#cdcdcd;"></div>
<svg class="a" style="left:1382px;top:121px;" width="11" height="7" viewBox="0 0 11 7"><path d="M1 6L5.5 1.5L10 6" stroke="#606060" stroke-width="1.6" fill="none"/></svg>
<svg class="a" style="left:1382px;top:473px;" width="11" height="7" viewBox="0 0 11 7"><path d="M1 1L5.5 5.5L10 1" stroke="#606060" stroke-width="1.6" fill="none"/></svg>
<div class="a" style="left:1397px;top:114px;width:14px;height:394px;background:#f6f6f6;"></div>
<div class="a" style="left:486px;top:488px;width:49px;height:20px;background:#f6f6f6;"></div>
<div class="a" style="left:535px;top:488px;width:842px;height:20px;background:#f0f0f0;"></div>
<svg class="a" style="left:541px;top:493px;" width="7" height="11" viewBox="0 0 7 11"><path d="M6 1L1.5 5.5L6 10" stroke="#a0a0a0" stroke-width="1.6" fill="none"/></svg>
<svg class="a" style="left:1362px;top:493px;" width="7" height="11" viewBox="0 0 7 11"><path d="M1 1L5.5 5.5L1 10" stroke="#a0a0a0" stroke-width="1.6" fill="none"/></svg>
<div class="a" style="left:486px;top:114px;width:891px;height:374px;overflow:hidden;">
<div class="a t" style="left:30px;top:4.00px;font:15px/15px 'Liberation Mono',monospace;color:#787878;">1</div>
<div class="a t" style="left:51px;top:4.00px;font:15px/15px 'Liberation Mono',monospace;"><span style="color:#3f7f5f;font-weight:normal">/*</span></div>
<svg class="a" style="left:39px;top:4.5px" width="10" height="10"><circle cx="5" cy="5" r="4.3" fill="#fff" stroke="#a8b4c4"/><path d="M2.5 5H7.5" stroke="#6a7a90" stroke-width="1.2"/></svg>
<div class="a t" style="left:30px;top:24.00px;font:15px/15px 'Liberation Mono',monospace;color:#787878;">2</div>
<div class="a t" style="left:51px;top:24.00px;font:15px/15px 'Liberation Mono',monospace;"><span style="color:#3f7f5f;font-weight:normal"> * Copyright 2021 NXP</span></div>
<div class="a t" style="left:30px;top:44.00px;font:15px/15px 'Liberation Mono',monospace;color:#787878;">3</div>
<div class="a t" style="left:51px;top:44.00px;font:15px/15px 'Liberation Mono',monospace;"><span style="color:#3f7f5f;font-weight:normal"> * All rights reserved.</span></div>
<div class="a t" style="left:30px;top:64.00px;font:15px/15px 'Liberation Mono',monospace;color:#787878;">4</div>
<div class="a t" style="left:51px;top:64.00px;font:15px/15px 'Liberation Mono',monospace;"><span style="color:#3f7f5f;font-weight:normal"> *</span></div>
<div class="a t" style="left:30px;top:84.00px;font:15px/15px 'Liberation Mono',monospace;color:#787878;">5</div>
<div class="a t" style="left:51px;top:84.00px;font:15px/15px 'Liberation Mono',monospace;"><span style="color:#3f7f5f;font-weight:normal"> * SPDX-License-Identifier: BSD-3-Clause</span></div>
<div class="a t" style="left:30px;top:104.00px;font:15px/15px 'Liberation Mono',monospace;color:#787878;">6</div>
<div class="a t" style="left:51px;top:104.00px;font:15px/15px 'Liberation Mono',monospace;"><span style="color:#3f7f5f;font-weight:normal"> */</span></div>
<div class="a t" style="left:30px;top:124.00px;font:15px/15px 'Liberation Mono',monospace;color:#787878;">7</div>
<div class="a t" style="left:51px;top:124.00px;font:15px/15px 'Liberation Mono',monospace;"></div>
<div class="a t" style="left:30px;top:144.00px;font:15px/15px 'Liberation Mono',monospace;color:#787878;">8</div>
<div class="a t" style="left:51px;top:144.00px;font:15px/15px 'Liberation Mono',monospace;"><span style="color:#7f0055;font-weight:bold">#include</span><span style="color:#2a00ff;font-weight:normal"> &quot;fsl_debug_console.h&quot;</span></div>
<div class="a t" style="left:30px;top:164.00px;font:15px/15px 'Liberation Mono',monospace;color:#787878;">9</div>
<div class="a t" style="left:51px;top:164.00px;font:15px/15px 'Liberation Mono',monospace;"></div>
<div class="a t" style="left:21px;top:184.00px;font:15px/15px 'Liberation Mono',monospace;color:#787878;">10</div>
<div class="a t" style="left:51px;top:184.00px;font:15px/15px 'Liberation Mono',monospace;"><span style="color:#7f0055;font-weight:bold">#include</span><span style="color:#2a00ff;font-weight:normal"> &quot;FreeRTOS.h&quot;</span></div>
<div class="a t" style="left:21px;top:204.00px;font:15px/15px 'Liberation Mono',monospace;color:#787878;">11</div>
<div class="a t" style="left:51px;top:204.00px;font:15px/15px 'Liberation Mono',monospace;"><span style="color:#7f0055;font-weight:bold">#include</span><span style="color:#2a00ff;font-weight:normal"> &quot;task.h&quot;</span></div>
<div class="a t" style="left:21px;top:224.00px;font:15px/15px 'Liberation Mono',monospace;color:#787878;">12</div>
<div class="a t" style="left:51px;top:224.00px;font:15px/15px 'Liberation Mono',monospace;"></div>
<div class="a t" style="left:21px;top:244.00px;font:15px/15px 'Liberation Mono',monospace;color:#787878;">13</div>
<div class="a t" style="left:51px;top:244.00px;font:15px/15px 'Liberation Mono',monospace;"><span style="color:#7f0055;font-weight:bold">#include</span><span style="color:#2a00ff;font-weight:normal"> &lt;peripheral_ht.h&gt;</span></div>
<div class="a t" style="left:21px;top:264.00px;font:15px/15px 'Liberation Mono',monospace;color:#787878;">14</div>
<div class="a t" style="left:51px;top:264.00px;font:15px/15px 'Liberation Mono',monospace;"></div>
<div class="a t" style="left:21px;top:284.00px;font:15px/15px 'Liberation Mono',monospace;color:#787878;">15</div>
<div class="a t" style="left:51px;top:284.00px;font:15px/15px 'Liberation Mono',monospace;"><span style="color:#7f0055;font-weight:bold">#include</span><span style="color:#2a00ff;font-weight:normal"> &quot;pin_mux.h&quot;</span></div>
<div class="a t" style="left:21px;top:304.00px;font:15px/15px 'Liberation Mono',monospace;color:#787878;">16</div>
<div class="a t" style="left:51px;top:304.00px;font:15px/15px 'Liberation Mono',monospace;"><span style="color:#7f0055;font-weight:bold">#include</span><span style="color:#2a00ff;font-weight:normal"> &quot;clock_config.h&quot;</span></div>
<div class="a t" style="left:21px;top:324.00px;font:15px/15px 'Liberation Mono',monospace;color:#787878;">17</div>
<div class="a t" style="left:51px;top:324.00px;font:15px/15px 'Liberation Mono',monospace;"><span style="color:#7f0055;font-weight:bold">#include</span><span style="color:#2a00ff;font-weight:normal"> &quot;board.h&quot;</span></div>
<div class="a t" style="left:21px;top:344.00px;font:15px/15px 'Liberation Mono',monospace;color:#787878;">18</div>
<div class="a t" style="left:51px;top:344.00px;font:15px/15px 'Liberation Mono',monospace;"><span style="color:#7f0055;font-weight:bold">#include</span><span style="color:#2a00ff;font-weight:normal"> &quot;fsl_adapter_uart.h&quot;</span></div>
<div class="a t" style="left:21px;top:364.00px;font:15px/15px 'Liberation Mono',monospace;color:#787878;">19</div>
<div class="a t" style="left:51px;top:364.00px;font:15px/15px 'Liberation Mono',monospace;"><span style="color:#3f7f5f;font-weight:normal">/*******************************************************************************</span></div>
<svg class="a" style="left:39px;top:364.5px" width="10" height="10"><circle cx="5" cy="5" r="4.3" fill="#fff" stroke="#a8b4c4"/><path d="M2.5 5H7.5" stroke="#6a7a90" stroke-width="1.2"/></svg>
</div>
<div class="a" style="left:1418px;top:82px;width:502px;height:429px;background:#f0f0f0;box-sizing:border-box;border:1px solid #d4d4d4;"></div>
<div class="a" style="left:1516px;top:83px;width:1px;height:28px;background:#d4d4d4;"></div>
<div class="a" style="left:1516px;top:111px;width:403px;height:1px;background:#d4d4d4;"></div>
<svg class="a" style="left:1424px;top:91px;" width="14" height="14" viewBox="0 0 14 14"><rect x="0.5" y="0.5" width="5" height="5" fill="#cfe3f7" stroke="#3a78c8"/><rect x="0.5" y="8.5" width="5" height="5" fill="#cfe3f7" stroke="#3a78c8"/><path d="M7 3H13M8 7H9M10.5 7H13M7 11H13" stroke="#3a78c8" stroke-width="1.2"/></svg>
<div class="a t" style="left:1443px;top:91.30px;font-size:15px;line-height:15px;color:#000;font-weight:normal;font-family:'Liberation Sans', sans-serif;">Outline</div>
<svg class="a" style="left:1498px;top:92px;" width="11" height="11" viewBox="0 0 11 11"><path d="M0.5 2L2 0.5L5.5 4L9 0.5L10.5 2L7 5.5L10.5 9L9 10.5L5.5 7L2 10.5L0.5 9L4 5.5Z" fill="#fff" stroke="#5a5a5a" stroke-width="1" stroke-linejoin="round"/></svg>
<div class="a t" style="left:1520px;top:93.53px;font-size:10px;line-height:10px;color:#2a4a80;font-weight:bold;font-family:'Liberation Sans', sans-serif;transform:scaleX(0.8858);transform-origin:0 0;">(x)=</div>
<div class="a t" style="left:1539px;top:91.30px;font-size:15px;line-height:15px;color:#000;font-weight:normal;font-family:'Liberation Sans', sans-serif;">Global Variables</div>
<svg class="a" style="left:1771px;top:87px;" width="17" height="17" viewBox="0 0 17 17"><path d="M1 2C4 1 7 2 8.5 3C10 2 13 1 16 2V14C13 13 10 14 8.5 15C7 14 4 13 1 14Z" fill="#f4f4f4" stroke="#777"/><path d="M10 3V15L12 13L14 15V3" fill="#3a7ac8"/></svg>
<div class="a" style="left:1793px;top:88px;width:1px;height:16px;background:#999;"></div>
<svg class="a" style="left:1803px;top:88px;" width="14" height="14" viewBox="0 0 14 14"><rect x="3.5" y="0.5" width="10" height="10" fill="#fff" stroke="#6a8ac0"/><rect x="0.5" y="3.5" width="10" height="10" fill="#e8f0fb" stroke="#4a6aa8"/><path d="M3 8.5H8" stroke="#203a80" stroke-width="1.4"/></svg>
<svg class="a" style="left:1826px;top:88px;" width="14" height="14" viewBox="0 0 14 14"><rect x="3.5" y="0.5" width="10" height="10" fill="#fff" stroke="#6a8ac0"/><rect x="0.5" y="3.5" width="10" height="10" fill="#e8f0fb" stroke="#4a6aa8"/><path d="M3 8.5H8M5.5 6V11" stroke="#203a80" stroke-width="1.4"/></svg>
<svg class="a" style="left:1855px;top:87px;" width="6" height="16" viewBox="0 0 6 16"><circle cx="3" cy="2.5" r="2" fill="none" stroke="#555"/><circle cx="3" cy="8" r="2" fill="none" stroke="#555"/><circle cx="3" cy="13.5" r="2" fill="none" stroke="#555"/></svg>
<svg class="a" style="left:1876px;top:90px;" width="10" height="5" viewBox="0 0 10 5"><path fill-rule="evenodd" d="M0 0H10V4.6H0ZM1.3 1.3V3.3H8.7V1.3Z" fill="#555"/><rect x="1.3" y="1.3" width="7.4" height="2" fill="#fff"/></svg>
<svg class="a" style="left:1899px;top:90px;" width="10" height="10" viewBox="0 0 10 10"><path fill-rule="evenodd" d="M0 0H10V10H0ZM1.3 1.3V8.7H8.7V1.3Z" fill="#555"/><rect x="1.3" y="1.3" width="7.4" height="7.4" fill="#fff"/><rect x="1.3" y="2.3" width="7.4" height="1.1" fill="#555"/></svg>
<div class="a" style="left:1419px;top:112px;width:500px;height:398px;background:#f0f0f0;"></div>
<div class="a" style="left:1421px;top:114px;width:496px;height:394px;background:#fff;"></div>
<div class="a" style="left:1423px;top:116px;width:494px;height:24px;background:#e9e9e9;"></div>
<div class="a t" style="left:1427px;top:120.30px;font-size:15px;line-height:15px;color:#404040;font-weight:bold;font-family:'Liberation Sans', sans-serif;transform:scaleX(0.9644);transform-origin:0 0;">SDK Details</div>
<div class="a t" style="left:1427px;top:143.30px;font-size:15px;line-height:15px;color:#505050;font-weight:normal;font-family:'Liberation Sans', sans-serif;transform:scaleX(0.9806);transform-origin:0 0;">No SDK selected</div>
<div class="a" style="left:483px;top:515px;width:1210px;height:489px;background:#f0f0f0;box-sizing:border-box;border:1px solid #d4d4d4;"></div>
<div class="a" style="left:484px;top:516px;width:144px;height:29px;background:#fff;"></div>
<div class="a" style="left:628px;top:516px;width:1px;height:28px;background:#d4d4d4;"></div>
<div class="a" style="left:628px;top:544px;width:1064px;height:1px;background:#d4d4d4;"></div>
<svg class="a" style="left:489px;top:522px;" width="15" height="15" viewBox="0 0 15 15"><ellipse cx="5" cy="3" rx="3.5" ry="2" fill="#fff0b0" stroke="#c89020"/><rect x="1.5" y="3" width="7" height="8" fill="#f8d870" stroke="#c89020"/><ellipse cx="10" cy="6" rx="3.5" ry="2" fill="#fff0b0" stroke="#c89020"/><rect x="6.5" y="6" width="7" height="8" fill="#f5c040" stroke="#c89020"/><ellipse cx="7" cy="8" rx="3.5" ry="2" fill="#fff6c8" stroke="#d08010"/><rect x="3.5" y="8" width="7" height="6.5" rx="1" fill="#f8c020" stroke="#d08010"/></svg>
<div class="a t" style="left:508px;top:524.30px;font-size:15px;line-height:15px;color:#000;font-weight:normal;font-family:'Liberation Sans', sans-serif;transform:scaleX(0.9657);transform-origin:0 0;">Installed SDKs</div>
<svg class="a" style="left:611px;top:524px;" width="11" height="11" viewBox="0 0 11 11"><path d="M0.5 2L2 0.5L5.5 4L9 0.5L10.5 2L7 5.5L10.5 9L9 10.5L5.5 7L2 10.5L0.5 9L4 5.5Z" fill="#fff" stroke="#5a5a5a" stroke-width="1" stroke-linejoin="round"/></svg>
<svg class="a" style="left:633px;top:524px;" width="15" height="15" viewBox="0 0 15 15"><rect x="0.5" y="1.5" width="13" height="11" fill="#fff" stroke="#6a80a8"/><rect x="1" y="2" width="12" height="2.5" fill="#8aa0c8"/><path d="M4 5V12M1 7.5H13M1 10H13" stroke="#a0b0c8"/></svg>
<div class="a t" style="left:652px;top:524.30px;font-size:15px;line-height:15px;color:#000;font-weight:normal;font-family:'Liberation Sans', sans-serif;transform:scaleX(0.9945);transform-origin:0 0;">Properties</div>
<svg class="a" style="left:729px;top:524px;" width="15" height="15" viewBox="0 0 15 15"><rect x="0.5" y="0.5" width="12" height="14" fill="#f8f0e0" stroke="#a09070"/><circle cx="6.5" cy="5" r="2.5" fill="#e02020"/><path d="M2 14L4.5 9L7 14Z" fill="#f0b020"/><rect x="8" y="9" width="4" height="5" fill="#5a8ad0"/></svg>
<div class="a t" style="left:749px;top:524.30px;font-size:15px;line-height:15px;color:#000;font-weight:normal;font-family:'Liberation Sans', sans-serif;transform:scaleX(0.9785);transform-origin:0 0;">Problems</div>
<svg class="a" style="left:823px;top:524px;" width="15" height="15" viewBox="0 0 15 15"><rect x="0.5" y="3.5" width="9" height="5" fill="#7ab050" stroke="#4a8030"/><rect x="0.5" y="3.5" width="4" height="5" fill="#a8d080"/><circle cx="11" cy="10" r="3.8" fill="#3aa03a"/><path d="M10 8L13 10L10 12Z" fill="#fff"/></svg>
<div class="a t" style="left:842px;top:524.30px;font-size:15px;line-height:15px;color:#000;font-weight:normal;font-family:'Liberation Sans', sans-serif;transform:scaleX(0.9328);transform-origin:0 0;">Progress</div>
<svg class="a" style="left:908px;top:524px;" width="15" height="15" viewBox="0 0 15 15"><rect x="0.5" y="0.5" width="13" height="10" rx="1.5" fill="#3a70c0" stroke="#24509a"/><rect x="2.5" y="2.5" width="9" height="6" fill="#e8f0ff"/><rect x="3" y="12" width="8" height="2" fill="#3a70c0"/></svg>
<div class="a t" style="left:926px;top:524.30px;font-size:15px;line-height:15px;color:#000;font-weight:normal;font-family:'Liberation Sans', sans-serif;transform:scaleX(0.9813);transform-origin:0 0;">Console</div>
<svg class="a" style="left:989px;top:524px;" width="15" height="15" viewBox="0 0 15 15"><rect x="6.5" y="0.5" width="8" height="7" fill="#3a70c0" stroke="#24509a"/><rect x="8" y="2" width="5" height="4" fill="#fff"/><path d="M1 14L8 8" stroke="#707070" stroke-width="2.5"/></svg>
<div class="a t" style="left:1009px;top:524.30px;font-size:15px;line-height:15px;color:#000;font-weight:normal;font-family:'Liberation Sans', sans-serif;transform:scaleX(0.9879);transform-origin:0 0;">Terminal</div>
<svg class="a" style="left:1077px;top:524px;" width="15" height="15" viewBox="0 0 15 15"><path d="M0.5 0.5H8L11.5 4V14.5H0.5Z" fill="#f7f9ff" stroke="#8a7a50"/><text x="6" y="13" font-size="5.5" font-weight="bold" fill="#2d4f8e" text-anchor="middle" font-family="Liberation Sans">010</text><rect x="2" y="4" width="5" height="1" fill="#6b8fc8"/></svg>
<div class="a t" style="left:1095px;top:524.30px;font-size:15px;line-height:15px;color:#000;font-weight:normal;font-family:'Liberation Sans', sans-serif;transform:scaleX(1.0154);transform-origin:0 0;">Image Info</div>
<svg class="a" style="left:1178px;top:524px;" width="15" height="15" viewBox="0 0 15 15"><rect x="0.5" y="0.5" width="12" height="10" rx="1" fill="#3a70c0" stroke="#24509a"/><rect x="2" y="2" width="9" height="6" fill="#e8f0ff"/><ellipse cx="10" cy="11" rx="3.5" ry="3.5" fill="#60b060" stroke="#306a30"/></svg>
<div class="a t" style="left:1196px;top:524.30px;font-size:15px;line-height:15px;color:#000;font-weight:normal;font-family:'Liberation Sans', sans-serif;transform:scaleX(0.9913);transform-origin:0 0;">Debugger Console</div>
<svg class="a" style="left:1546px;top:521px;" width="16" height="16" viewBox="0 0 16 16"><rect x="0.5" y="0.5" width="15" height="15" rx="2" fill="#3a9aa8" stroke="#1f6f7a"/><path d="M4 3.5L12 12.5M12 3.5L4 12.5" stroke="#0a4a55" stroke-width="2.4"/></svg>
<svg class="a" style="left:1570px;top:522px;" width="14" height="14" viewBox="0 0 14 14"><circle cx="7" cy="7" r="6.5" fill="#2f7fb8"/><path d="M3 4C5 3 6 5 5 7C4 9 6 10 7 12" fill="none" stroke="#5aa040" stroke-width="2"/></svg>
<svg class="a" style="left:1593px;top:521px;" width="16" height="16" viewBox="0 0 16 16"><path d="M2 3H8M2 3V9M14 8V14H8" fill="none" stroke="#d09010" stroke-width="1.6"/><rect x="5" y="5" width="6" height="6" fill="#fff6c0" stroke="#d09010"/></svg>
<div class="a" style="left:1614px;top:520px;width:1px;height:17px;background:#999;"></div>
<svg class="a" style="left:1624px;top:522px;" width="15" height="13" viewBox="0 0 15 13"><rect x="0.5" y="0.5" width="13" height="11" fill="#fff" stroke="#6a80a8"/><rect x="1" y="1" width="12" height="2.5" fill="#8aa0c8"/><path d="M1 5.5H13M1 8H13M1 10.5H13" stroke="#a0b0c8"/></svg>
<svg class="a" style="left:1649px;top:523px;" width="10" height="5" viewBox="0 0 10 5"><path fill-rule="evenodd" d="M0 0H10V4.6H0ZM1.3 1.3V3.3H8.7V1.3Z" fill="#555"/><rect x="1.3" y="1.3" width="7.4" height="2" fill="#fff"/></svg>
<svg class="a" style="left:1672px;top:523px;" width="10" height="10" viewBox="0 0 10 10"><path fill-rule="evenodd" d="M0 0H10V10H0ZM1.3 1.3V8.7H8.7V1.3Z" fill="#555"/><rect x="1.3" y="1.3" width="7.4" height="7.4" fill="#fff"/><rect x="1.3" y="2.3" width="7.4" height="1.1" fill="#555"/></svg>
<div class="a" style="left:484px;top:545px;width:1208px;height:457px;background:#fff;"></div>
<svg class="a" style="left:493px;top:563px;" width="15" height="15" viewBox="0 0 15 15"><ellipse cx="5" cy="3" rx="3.5" ry="2" fill="#fff0b0" stroke="#c89020"/><rect x="1.5" y="3" width="7" height="8" fill="#f8d870" stroke="#c89020"/><ellipse cx="10" cy="6" rx="3.5" ry="2" fill="#fff0b0" stroke="#c89020"/><rect x="6.5" y="6" width="7" height="8" fill="#f5c040" stroke="#c89020"/><ellipse cx="7" cy="8" rx="3.5" ry="2" fill="#fff6c8" stroke="#d08010"/><rect x="3.5" y="8" width="7" height="6.5" rx="1" fill="#f8c020" stroke="#d08010"/></svg>
<div class="a t" style="left:513px;top:560.07px;font-size:20px;line-height:20px;color:#404040;font-weight:bold;font-family:'Liberation Sans', sans-serif;transform:scaleX(0.9710);transform-origin:0 0;">Installed SDKs</div>
<div class="a" style="left:486px;top:587px;width:1204px;height:2px;background:#e6e6e6;"></div>
<div class="a t" style="left:491px;top:597.30px;font-size:15px;line-height:15px;color:#000;font-weight:normal;font-family:'Liberation Sans', sans-serif;">To install an SDK, simply drag and drop an SDK (zip file/folder) into the &#x27;Installed SDKs&#x27; view. [Common &#x27;mcuxpresso&#x27; folder]</div>
<svg class="a" style="left:490px;top:617px" width="1198" height="382" viewBox="0 0 1198 382"><path d="M1.5 379V10.5Q1.5 2.5 9.5 2.5H88C95 2.5 99 4 103 7C109 12 115 20 119 23C122 25.5 125 26.5 129 26.5H1194.5" fill="none" stroke="#9c9c9c"/><path d="M89 2.5H1188.5Q1194.5 2.5 1194.5 8.5V378.5H1.5" fill="none" stroke="#9c9c9c"/><path d="M231 2.5Q236.5 2.5 236.5 8.5V26.5" fill="none" stroke="#9c9c9c"/><path d="M356 2.5Q361.5 2.5 361.5 8.5V26.5" fill="none" stroke="#9c9c9c"/></svg>
<div class="a t" style="left:495px;top:625.30px;font-size:15px;line-height:15px;color:#000;font-weight:normal;font-family:'Liberation Sans', sans-serif;transform:scaleX(0.9657);transform-origin:0 0;">Installed SDKs</div>
<div class="a t" style="left:611px;top:625.30px;font-size:15px;line-height:15px;color:#000;font-weight:normal;font-family:'Liberation Sans', sans-serif;">Available Boards</div>
<div class="a t" style="left:731px;top:625.30px;font-size:15px;line-height:15px;color:#000;font-weight:normal;font-family:'Liberation Sans', sans-serif;">Available Devices</div>
<div class="a" style="left:858px;top:648px;width:1px;height:22px;background:#e8e8e8;"></div>
<div class="a" style="left:1040px;top:648px;width:1px;height:22px;background:#e8e8e8;"></div>
<div class="a" style="left:1222px;top:648px;width:1px;height:22px;background:#e8e8e8;"></div>
<div class="a" style="left:1678px;top:648px;width:1px;height:22px;background:#e8e8e8;"></div>
<div class="a t" style="left:500px;top:652.30px;font-size:15px;line-height:15px;color:#000;font-weight:normal;font-family:'Liberation Sans', sans-serif;">Name</div>
<div class="a t" style="left:865px;top:652.30px;font-size:15px;line-height:15px;color:#000;font-weight:normal;font-family:'Liberation Sans', sans-serif;transform:scaleX(0.9526);transform-origin:0 0;">SDK Version</div>
<div class="a t" style="left:1047px;top:652.30px;font-size:15px;line-height:15px;color:#000;font-weight:normal;font-family:'Liberation Sans', sans-serif;transform:scaleX(0.9918);transform-origin:0 0;">Manifest Version</div>
<div class="a t" style="left:1229px;top:652.30px;font-size:15px;line-height:15px;color:#000;font-weight:normal;font-family:'Liberation Sans', sans-serif;transform:scaleX(1.0050);transform-origin:0 0;">Location</div>
<div class="a" style="left:494px;top:673px;width:40px;height:23px;box-sizing:border-box;border:1px dotted #000;"></div>
<div class="a" style="left:533px;top:673px;width:326px;height:23px;box-sizing:border-box;border:1px dotted #000;"></div>
<div class="a" style="left:858px;top:673px;width:820px;height:23px;box-sizing:border-box;border:1px dotted #000;"></div>
<svg class="a" style="left:498px;top:676px;" width="17" height="17" viewBox="0 0 17 17"><rect x="0.5" y="0.5" width="15" height="15" fill="#fff" stroke="#333"/><path d="M3.5 8L6.5 11L12.5 4.5" fill="none" stroke="#333" stroke-width="1.5"/></svg>
<svg class="a" style="left:520px;top:678px;" width="12" height="12" viewBox="0 0 12 12"><rect x="0.5" y="0.5" width="11" height="11" fill="#d8d8b0" stroke="#a0a070"/><path d="M4 0V12M8 0V12M0 4H12M0 8H12" stroke="#909060"/></svg>
<div class="a t" style="left:535px;top:677.30px;font-size:15px;line-height:15px;color:#000;font-weight:normal;font-family:'Liberation Sans', sans-serif;transform:scaleX(0.9316);transform-origin:0 0;">SDK_2.x_board_EVK-MIMXRT1060</div>
<div class="a t" style="left:865px;top:677.30px;font-size:15px;line-height:15px;color:#000;font-weight:normal;font-family:'Liberation Sans', sans-serif;transform:scaleX(0.9588);transform-origin:0 0;">2.9.0</div>
<div class="a t" style="left:1047px;top:677.30px;font-size:15px;line-height:15px;color:#000;font-weight:normal;font-family:'Liberation Sans', sans-serif;transform:scaleX(0.9588);transform-origin:0 0;">3.8.0</div>
<svg class="a" style="left:1223px;top:676px;" width="16" height="16" viewBox="0 0 16 16"><rect x="5.5" y="1.5" width="9" height="11" rx="1" fill="#e0e8f8" stroke="#6a80b8"/><rect x="3.5" y="3.5" width="7" height="10" rx="1" fill="#f4f8ff" stroke="#6a80b8"/><path d="M0 15L3 12V15Z" fill="#2a6ad0"/></svg>
<div class="a t" style="left:1249px;top:677.30px;font-size:15px;line-height:15px;color:#a8a8a8;font-weight:normal;font-family:'Liberation Sans', sans-serif;transform:scaleX(0.9950);transform-origin:0 0;">&lt;Common&gt;</div>
<div class="a t" style="left:1328px;top:677.30px;font-size:15px;line-height:15px;color:#000;font-weight:normal;font-family:'Liberation Sans', sans-serif;transform:scaleX(0.9628);transform-origin:0 0;">\board_EVK-MIMXRT1060.zip</div>
<div class="a" style="left:1697px;top:515px;width:223px;height:489px;background:#f0f0f0;box-sizing:border-box;border:1px solid #d4d4d4;"></div>
<div class="a" style="left:1862px;top:516px;width:1px;height:28px;background:#d4d4d4;"></div>
<div class="a" style="left:1796px;top:516px;width:1px;height:28px;background:#d4d4d4;"></div>
<div class="a" style="left:1698px;top:544px;width:99px;height:1px;background:#d4d4d4;"></div>
<div class="a" style="left:1862px;top:544px;width:57px;height:1px;background:#d4d4d4;"></div>
<svg class="a" style="left:1706px;top:522px;" width="10" height="16" viewBox="0 0 10 16"><rect x="0.5" y="1" width="9" height="14" rx="4.5" fill="#8ab0e8" stroke="#3a60b0"/><ellipse cx="5" cy="3" rx="4.5" ry="2" fill="#c8dcf8" stroke="#3a60b0"/></svg>
<div class="a t" style="left:1722px;top:524.30px;font-size:15px;line-height:15px;color:#000;font-weight:normal;font-family:'Liberation Sans', sans-serif;">M</div>
<div class="a t" style="left:1753px;top:526.53px;font-size:10px;line-height:10px;color:#2a4a80;font-weight:bold;font-family:'Liberation Sans', sans-serif;transform:scaleX(0.8858);transform-origin:0 0;">(x)=</div>
<div class="a t" style="left:1773px;top:524.30px;font-size:15px;line-height:15px;color:#000;font-weight:normal;font-family:'Liberation Sans', sans-serif;">H</div>
<svg class="a" style="left:1800px;top:523px;" width="18" height="16" viewBox="0 0 18 16"><path d="M1 15L4 9L12 2L16 5L9 12Z" fill="#d8b070" stroke="#9a7030"/><path d="M4 9L9 12L2 15Z" fill="#fff8c0"/><path d="M6 7L10 11" stroke="#888" stroke-width="2.5"/></svg>
<div class="a t" style="left:1820px;top:524.30px;font-size:15px;line-height:15px;color:#000;font-weight:normal;font-family:'Liberation Sans', sans-serif;">S</div>
<svg class="a" style="left:1844px;top:526px;" width="11" height="11" viewBox="0 0 11 11"><path d="M0.5 2L2 0.5L5.5 4L9 0.5L10.5 2L7 5.5L10.5 9L9 10.5L5.5 7L2 10.5L0.5 9L4 5.5Z" fill="#fff" stroke="#5a5a5a" stroke-width="1" stroke-linejoin="round"/></svg>
<svg class="a" style="left:1876px;top:523px;" width="10" height="5" viewBox="0 0 10 5"><path fill-rule="evenodd" d="M0 0H10V4.6H0ZM1.3 1.3V3.3H8.7V1.3Z" fill="#555"/><rect x="1.3" y="1.3" width="7.4" height="2" fill="#fff"/></svg>
<svg class="a" style="left:1899px;top:523px;" width="10" height="10" viewBox="0 0 10 10"><path fill-rule="evenodd" d="M0 0H10V10H0ZM1.3 1.3V8.7H8.7V1.3Z" fill="#555"/><rect x="1.3" y="1.3" width="7.4" height="7.4" fill="#fff"/><rect x="1.3" y="2.3" width="7.4" height="1.1" fill="#555"/></svg>
<svg class="a" style="left:1786px;top:548px;" width="16" height="16" viewBox="0 0 16 16"><path d="M2 9C2 4 8 2 11 5L9 6M11 5L11 2M14 7C14 12 8 14 5 11L7 10M5 11L5 14" fill="none" stroke="#c0c0c0" stroke-width="1.6"/></svg>
<svg class="a" style="left:1810px;top:551px;" width="12" height="12" viewBox="0 0 12 12"><rect x="0.5" y="0.5" width="11" height="11" rx="1.5" fill="#a8a8a8" stroke="#909090"/></svg>
<svg class="a" style="left:1831px;top:547px;" width="18" height="18" viewBox="0 0 18 18"><rect x="0.5" y="0.5" width="8" height="9" fill="#f4f4f4" stroke="#bbb"/><path d="M3 16L7 10L14 3L17 6L10 13Z" fill="#d8d8d8" stroke="#aaa"/></svg>
<svg class="a" style="left:1856px;top:554px;" width="10" height="6" viewBox="0 0 10 6"><path d="M0 0H9L4.5 5Z" fill="#666"/></svg>
<svg class="a" style="left:1875px;top:549px;" width="15" height="15" viewBox="0 0 15 15"><rect x="0.5" y="3.5" width="11" height="10" fill="#eef4fb" stroke="#a08850"/><rect x="1" y="4" width="10" height="2.5" fill="#5b8fd0"/><path d="M7 9L12 3" stroke="#2a8a3a" stroke-width="2.2"/><circle cx="12" cy="3" r="2.3" fill="#2a8a3a"/></svg>
<svg class="a" style="left:1904px;top:548px;" width="6" height="16" viewBox="0 0 6 16"><circle cx="3" cy="2.5" r="2" fill="none" stroke="#555"/><circle cx="3" cy="8" r="2" fill="none" stroke="#555"/><circle cx="3" cy="13.5" r="2" fill="none" stroke="#555"/></svg>
<div class="a" style="left:1700px;top:569px;width:217px;height:432px;background:#fff;"></div>
<div class="a t" style="left:1705px;top:577.30px;font-size:15px;line-height:15px;color:#000;font-weight:normal;font-family:'Liberation Sans', sans-serif;transform:scaleX(0.9768);transform-origin:0 0;">No search results available.</div>
<div class="a t" style="left:1705px;top:597.30px;font-size:15px;line-height:15px;color:#000;font-weight:normal;font-family:'Liberation Sans', sans-serif;transform:scaleX(0.9828);transform-origin:0 0;">Start a search from the</div>
<div class="a t" style="left:1859px;top:597.30px;font-size:15px;line-height:15px;color:#0b63d8;font-weight:normal;font-family:'Liberation Sans', sans-serif;transform:scaleX(0.9549);transform-origin:0 0;text-decoration:underline;">search</div>
<div class="a t" style="left:1705px;top:617.30px;font-size:15px;line-height:15px;color:#0b63d8;font-weight:normal;font-family:'Liberation Sans', sans-serif;text-decoration:underline;">dialog</div>
<div class="a t" style="left:1747px;top:617.30px;font-size:15px;line-height:15px;color:#000;font-weight:normal;font-family:'Liberation Sans', sans-serif;transform:scaleX(0.6667);transform-origin:0 0;">…</div>
<div class="a" style="left:0px;top:1004px;width:1920px;height:26px;background:#f0f0f0;"></div>
<svg class="a" style="left:1206px;top:1009px;" width="2" height="17" viewBox="0 0 2 17"><rect x="0" y="0" width="2" height="2" fill="#a89f8a"/><rect x="0" y="4" width="2" height="2" fill="#a89f8a"/><rect x="0" y="8" width="2" height="2" fill="#a89f8a"/><rect x="0" y="12" width="2" height="2" fill="#a89f8a"/><rect x="0" y="16" width="2" height="2" fill="#a89f8a"/></svg>
<svg class="a" style="left:1563px;top:1009px;" width="2" height="17" viewBox="0 0 2 17"><rect x="0" y="0" width="2" height="2" fill="#a89f8a"/><rect x="0" y="4" width="2" height="2" fill="#a89f8a"/><rect x="0" y="8" width="2" height="2" fill="#a89f8a"/><rect x="0" y="12" width="2" height="2" fill="#a89f8a"/><rect x="0" y="16" width="2" height="2" fill="#a89f8a"/></svg>
<svg class="a" style="left:1571px;top:1010px;" width="15" height="15" viewBox="0 0 15 15"><path d="M4 3.5A5.5 5.5 0 1 0 11 3.5" fill="none" stroke="#3a9ae0" stroke-width="1.8"/><path d="M7.5 0.5V7" stroke="#3a9ae0" stroke-width="1.8"/></svg>
<div class="a t" style="left:1595px;top:1014.30px;font-size:15px;line-height:15px;color:#1a6fcf;font-weight:normal;font-family:'Liberation Sans', sans-serif;transform:scaleX(0.9444);transform-origin:0 0;">NXP MIMXRT1062xxxxA* (evkmimx…eral_ht)</div>
</body></html>
